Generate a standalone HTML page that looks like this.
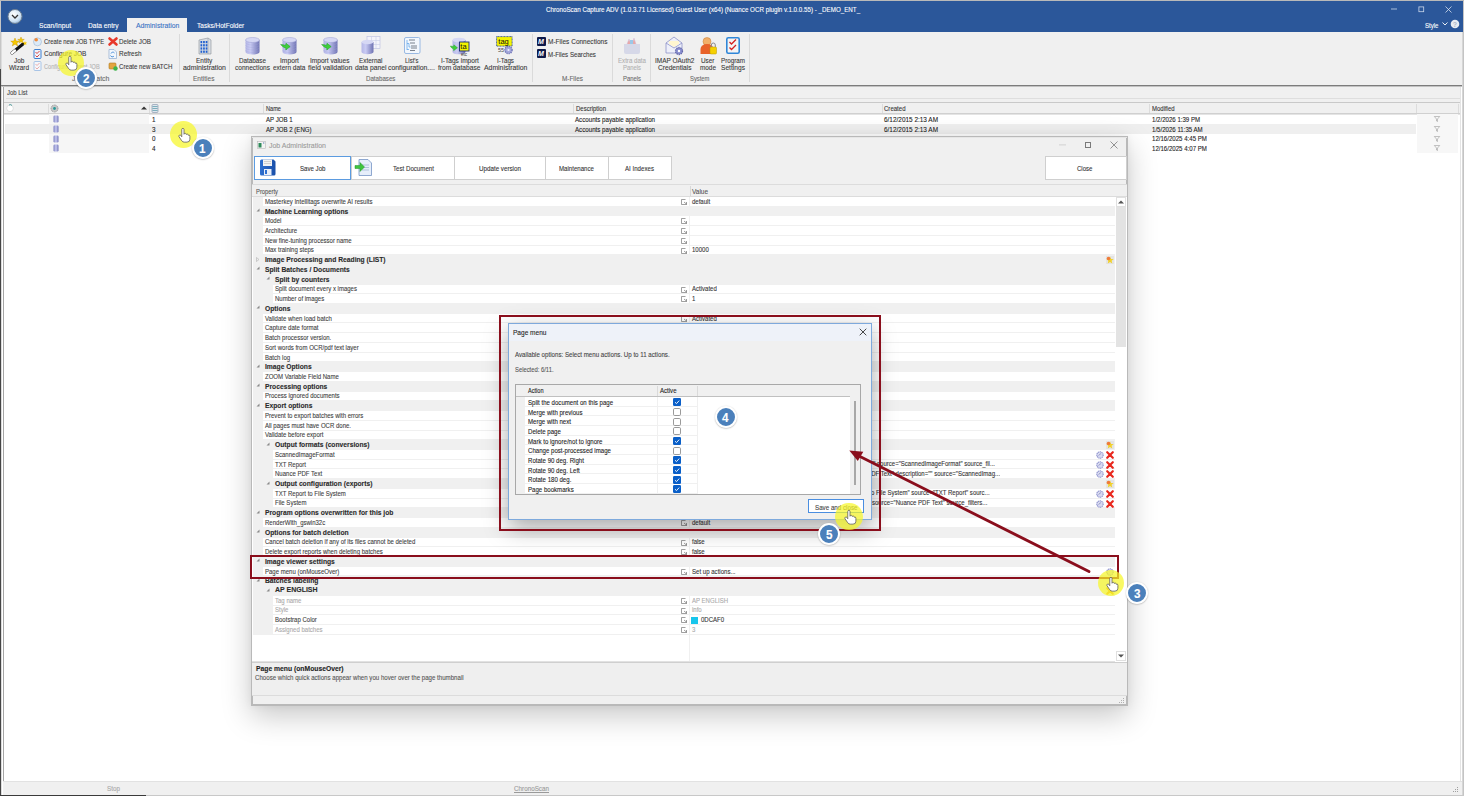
<!DOCTYPE html>
<html><head><meta charset="utf-8"><title>ChronoScan</title>
<style>
html,body{margin:0;padding:0;}
body{width:1464px;height:796px;position:relative;overflow:hidden;background:#fff;font-family:"Liberation Sans",sans-serif;}
.t{position:absolute;white-space:nowrap;line-height:1;transform-origin:0 0;font-family:"Liberation Sans",sans-serif;-webkit-text-stroke:0.1px currentColor;}
.r{position:absolute;box-sizing:border-box;}
svg.r{overflow:visible;}
</style></head><body>
<div class="r" style="left:0px;top:0px;width:1464px;height:796px;background:#ffffff;"></div>
<div class="r" style="left:0px;top:0px;width:1464px;height:1px;background:#b9b9b9;"></div>
<div class="r" style="left:1px;top:1px;width:1462px;height:31px;background:#2b579a;"></div>
<svg class="r" style="left:7px;top:9px;" width="16" height="16" viewBox="0 0 16 16"><defs><radialGradient id="cg" cx="40%" cy="35%" r="70%"><stop offset="0" stop-color="#ffffff"/><stop offset="0.7" stop-color="#cfe3f5"/><stop offset="1" stop-color="#8fb3d6"/></radialGradient></defs><circle cx="8" cy="7.5" r="7" fill="url(#cg)" stroke="#6e7f92" stroke-width="1"/><path d="M5 6 L8 9 L11 6" fill="none" stroke="#333" stroke-width="1.3"/></svg>
<div class="t" style="left:545.60px;top:6.38px;font-size:7px;color:#ffffff;transform:scaleX(0.8905);">ChronoScan Capture ADV (1.0.3.71 Licensed) Guest User  (x64)  (Nuance OCR plugin v.1.0.0.55) - _DEMO_ENT_</div>
<svg class="r" style="left:1391px;top:8px;" width="7" height="2" viewBox="0 0 7 2"><rect x="0" y="0.6" width="6" height="0.8" fill="#c9d6ea"/></svg>
<svg class="r" style="left:1418px;top:6px;" width="7" height="7" viewBox="0 0 7 7"><rect x="0.9" y="0.9" width="4.8" height="4.8" fill="none" stroke="#c9d6ea" stroke-width="0.8"/></svg>
<svg class="r" style="left:1445px;top:6px;" width="7" height="7" viewBox="0 0 7 7"><path d="M0.5 0.5 L6.5 6.5 M6.5 0.5 L0.5 6.5" stroke="#d6e0ef" stroke-width="0.8"/></svg>
<div class="t" style="left:39.00px;top:21.98px;font-size:7px;color:#ffffff;transform:scaleX(0.9561);">Scan/Input</div>
<div class="t" style="left:88.00px;top:21.98px;font-size:7px;color:#ffffff;transform:scaleX(0.9476);">Data entry</div>
<div class="r" style="left:127px;top:18px;width:60px;height:14px;background:#f0f0f0;"></div>
<div class="t" style="left:135.70px;top:21.98px;font-size:7px;color:#3a72c4;transform:scaleX(0.9763);">Administration</div>
<div class="t" style="left:196.50px;top:21.98px;font-size:7px;color:#ffffff;transform:scaleX(0.9333);">Tasks/HotFolder</div>
<div class="t" style="left:1425.00px;top:21.98px;font-size:7px;color:#ffffff;transform:scaleX(0.8675);">Style</div>
<svg class="r" style="left:1442px;top:22px;" width="6" height="4" viewBox="0 0 6 4"><path d="M0.5 0.5 L3 3 L5.5 0.5" fill="none" stroke="#fff" stroke-width="0.9"/></svg>
<svg class="r" style="left:1450px;top:19px;" width="10" height="10" viewBox="0 0 10 10"><circle cx="5" cy="5" r="4.3" fill="#e9edf3"/><text x="5" y="7.6" font-size="7" text-anchor="middle" fill="#aeb8c8" font-family="Liberation Sans" font-weight="bold">?</text></svg>
<div class="r" style="left:1px;top:32px;width:1462px;height:53px;background:#f0f0f0;"></div>
<div class="r" style="left:0px;top:1px;width:1px;height:68px;background:#c6c6c6;"></div>
<div class="r" style="left:0px;top:69px;width:1px;height:727px;background:#454545;"></div>
<div class="r" style="left:1px;top:32px;width:1px;height:764px;background:#dcdcdc;"></div>
<div class="r" style="left:1463px;top:1px;width:1px;height:795px;background:#c4c4c4;"></div>
<div class="r" style="left:1462px;top:32px;width:1px;height:764px;background:#d6d6d6;"></div>
<div class="r" style="left:1px;top:85px;width:1461px;height:1px;background:#7c7c7c;"></div>
<div class="r" style="left:1px;top:86px;width:1461px;height:1px;background:#c2c2c2;"></div>
<div class="r" style="left:179px;top:34px;width:1px;height:48px;background:#dadada;"></div>
<div class="r" style="left:229px;top:34px;width:1px;height:48px;background:#dadada;"></div>
<div class="r" style="left:532px;top:34px;width:1px;height:48px;background:#dadada;"></div>
<div class="r" style="left:612px;top:34px;width:1px;height:48px;background:#dadada;"></div>
<div class="r" style="left:650px;top:34px;width:1px;height:48px;background:#dadada;"></div>
<div class="r" style="left:749px;top:34px;width:1px;height:48px;background:#dadada;"></div>
<svg class="r" style="left:10px;top:37px;" width="18" height="18" viewBox="0 0 18 18"><path d="M2 16 L13 7" stroke="#111" stroke-width="3" stroke-linecap="round"/><path d="M2 16 L5 13.5" stroke="#fff" stroke-width="2.4" stroke-linecap="round"/><polygon points="5,1 6.2,4 9.3,4.1 6.9,6 7.7,9 5,7.3 2.3,9 3.1,6 0.7,4.1 3.8,4" fill="#f6c700" stroke="#c09000" stroke-width="0.4"/><polygon points="11,0 11.9,2.3 14.3,2.4 12.4,3.8 13.1,6.1 11,4.8 8.9,6.1 9.6,3.8 7.7,2.4 10.1,2.3" fill="#f6c700" stroke="#c09000" stroke-width="0.4"/><polygon points="15,4 15.6,5.5 17.2,5.6 16,6.6 16.4,8.1 15,7.2 13.6,8.1 14,6.6 12.8,5.6 14.4,5.5" fill="#f6c700"/></svg>
<div class="t" style="left:13.78px;top:56.88px;font-size:7.2px;color:#3a3a3a;transform:scaleX(0.9000);">Job</div>
<div class="t" style="left:8.92px;top:64.28px;font-size:7.2px;color:#3a3a3a;transform:scaleX(0.9000);">Wizard</div>
<svg class="r" style="left:33px;top:37px;" width="9" height="9" viewBox="0 0 9 9"><circle cx="4.5" cy="4.8" r="4" fill="#dceaf7" stroke="#9bb6d3" stroke-width="0.6"/><circle cx="3.2" cy="2.8" r="1.8" fill="#f08a3a"/></svg>
<div class="t" style="left:43.60px;top:37.98px;font-size:7.2px;color:#3a3a3a;transform:scaleX(0.8191);">Create new JOB TYPE</div>
<svg class="r" style="left:33px;top:49px;" width="9" height="10" viewBox="0 0 9 10"><rect x="1" y="0.5" width="7" height="9" rx="1" fill="#eef4fb" stroke="#3c7fd0" stroke-width="1"/><path d="M2.5 3 L4 4.5 L6.5 2 M2.5 6.5 L4 8 L6.5 5.5" stroke="#d43030" stroke-width="0.9" fill="none"/></svg>
<div class="t" style="left:43.60px;top:50.28px;font-size:7.2px;color:#3a3a3a;transform:scaleX(0.9000);">Configure JOB</div>
<svg class="r" style="left:33px;top:61px;" width="9" height="10" viewBox="0 0 9 10"><rect x="1" y="0.5" width="7" height="9" rx="1" fill="#f4f7fb" stroke="#a8c4e6" stroke-width="1"/><path d="M2.5 3 L4 4.5 L6.5 2 M2.5 6.5 L4 8 L6.5 5.5" stroke="#e8a0a0" stroke-width="0.9" fill="none"/></svg>
<div class="t" style="left:43.60px;top:62.68px;font-size:7.2px;color:#b4b4b4;transform:scaleX(0.7776);">Configure current JOB</div>
<svg class="r" style="left:108px;top:37px;" width="10" height="9" viewBox="0 0 10 9"><path d="M1.5 1.5 L8.5 7.5 M8.5 1.5 L1.5 7.5" stroke="#e8382a" stroke-width="2.6" stroke-linecap="round"/></svg>
<div class="t" style="left:119.00px;top:37.98px;font-size:7.2px;color:#3a3a3a;transform:scaleX(0.8692);">Delete JOB</div>
<svg class="r" style="left:108px;top:49px;" width="9" height="10" viewBox="0 0 9 10"><path d="M1 0.5 H6 L8.5 3 V9.5 H1 Z" fill="#f3f7fc" stroke="#8eabd0" stroke-width="0.7"/><path d="M3 4.5 A2 2 0 0 1 6.5 4 M6 7 A2 2 0 0 1 2.5 6.5" stroke="#3b86d6" stroke-width="0.9" fill="none"/></svg>
<div class="t" style="left:119.00px;top:50.28px;font-size:7.2px;color:#3a3a3a;transform:scaleX(0.8925);">Refresh</div>
<svg class="r" style="left:108px;top:61px;" width="10" height="10" viewBox="0 0 10 10"><rect x="1" y="2" width="7" height="6" rx="1" fill="#e3a540" stroke="#b07820" stroke-width="0.6"/><circle cx="7.5" cy="7.5" r="2.2" fill="#3cb44a"/></svg>
<div class="t" style="left:119.00px;top:62.68px;font-size:7.2px;color:#3a3a3a;transform:scaleX(0.8534);">Create new BATCH</div>
<div class="t" style="left:72.05px;top:74.88px;font-size:7.2px;color:#6a6a6a;transform:scaleX(0.9659);">Job &amp; Batch</div>
<svg class="r" style="left:196px;top:37px;" width="17" height="18" viewBox="0 0 17 18"><path d="M3 3 L12 1 L15 3 V17 L3 17 Z" fill="#d9dde3" stroke="#8a9099" stroke-width="0.6"/><path d="M12 1 V17" stroke="#9aa0a8" stroke-width="0.6"/><rect x="4.5" y="4.0" width="1.7" height="2.2" fill="#1f5fd0"/><rect x="7.1" y="4.0" width="1.7" height="2.2" fill="#1f5fd0"/><rect x="9.7" y="4.0" width="1.7" height="2.2" fill="#1f5fd0"/><rect x="4.5" y="7.2" width="1.7" height="2.2" fill="#1f5fd0"/><rect x="7.1" y="7.2" width="1.7" height="2.2" fill="#1f5fd0"/><rect x="9.7" y="7.2" width="1.7" height="2.2" fill="#1f5fd0"/><rect x="4.5" y="10.4" width="1.7" height="2.2" fill="#1f5fd0"/><rect x="7.1" y="10.4" width="1.7" height="2.2" fill="#1f5fd0"/><rect x="9.7" y="10.4" width="1.7" height="2.2" fill="#1f5fd0"/><rect x="4.5" y="13.600000000000001" width="1.7" height="2.2" fill="#1f5fd0"/><rect x="7.1" y="13.600000000000001" width="1.7" height="2.2" fill="#1f5fd0"/><rect x="9.7" y="13.600000000000001" width="1.7" height="2.2" fill="#1f5fd0"/></svg>
<div class="t" style="left:195.90px;top:56.88px;font-size:7.2px;color:#3a3a3a;transform:scaleX(0.9000);">Entity</div>
<div class="t" style="left:182.50px;top:64.28px;font-size:7.2px;color:#3a3a3a;transform:scaleX(0.9594);">administration</div>
<div class="t" style="left:193.25px;top:74.88px;font-size:7.2px;color:#6a6a6a;transform:scaleX(0.9106);">Entities</div>
<svg class="r" style="left:245px;top:37px;" width="18" height="19" viewBox="0 0 18 19"><defs><linearGradient id="cy245" x1="0" x2="1"><stop offset="0" stop-color="#b4b6e6"/><stop offset="0.35" stop-color="#c9cbf3"/><stop offset="1" stop-color="#6f73b3"/></linearGradient></defs><path d="M0.5 3 V15 A7.0 2.5 0 0 0 14.5 15 V3 Z" fill="url(#cy245)"/><path d="M0.5 5.5 A7.0 2.5 0 0 0 14.5 5.5" fill="none" stroke="#9ea1d6" stroke-width="0.4" opacity="0.7"/><path d="M0.5 8 A7.0 2.5 0 0 0 14.5 8" fill="none" stroke="#9ea1d6" stroke-width="0.4" opacity="0.7"/><path d="M0.5 10.5 A7.0 2.5 0 0 0 14.5 10.5" fill="none" stroke="#9ea1d6" stroke-width="0.4" opacity="0.7"/><path d="M0.5 13 A7.0 2.5 0 0 0 14.5 13" fill="none" stroke="#9ea1d6" stroke-width="0.4" opacity="0.7"/><ellipse cx="7.5" cy="3" rx="7.0" ry="2.5" fill="#d6d8f4" stroke="#9a9dd0" stroke-width="0.5"/></svg>
<div class="t" style="left:238.50px;top:56.88px;font-size:7.2px;color:#3a3a3a;transform:scaleX(0.8760);">Database</div>
<div class="t" style="left:234.50px;top:64.28px;font-size:7.2px;color:#3a3a3a;transform:scaleX(0.9108);">connections</div>
<svg class="r" style="left:282px;top:37px;" width="18" height="19" viewBox="0 0 18 19"><defs><linearGradient id="cy282" x1="0" x2="1"><stop offset="0" stop-color="#b4b6e6"/><stop offset="0.35" stop-color="#c9cbf3"/><stop offset="1" stop-color="#6f73b3"/></linearGradient></defs><path d="M0.5 3 V15 A7.0 2.5 0 0 0 14.5 15 V3 Z" fill="url(#cy282)"/><path d="M0.5 5.5 A7.0 2.5 0 0 0 14.5 5.5" fill="none" stroke="#9ea1d6" stroke-width="0.4" opacity="0.7"/><path d="M0.5 8 A7.0 2.5 0 0 0 14.5 8" fill="none" stroke="#9ea1d6" stroke-width="0.4" opacity="0.7"/><path d="M0.5 10.5 A7.0 2.5 0 0 0 14.5 10.5" fill="none" stroke="#9ea1d6" stroke-width="0.4" opacity="0.7"/><path d="M0.5 13 A7.0 2.5 0 0 0 14.5 13" fill="none" stroke="#9ea1d6" stroke-width="0.4" opacity="0.7"/><ellipse cx="7.5" cy="3" rx="7.0" ry="2.5" fill="#d6d8f4" stroke="#9a9dd0" stroke-width="0.5"/><path d="M-1.4 7.5 Q1.5 7.5 3.5 8.5 L4 6.2 L8.2 9.6 L3.8 13 L3.9 11.2 Q1 10.5 -1.4 7.5 Z" fill="#3fcf3a" stroke="#1c9a22" stroke-width="0.5"/></svg>
<div class="t" style="left:279.50px;top:56.88px;font-size:7.2px;color:#3a3a3a;transform:scaleX(0.9312);">Import</div>
<div class="t" style="left:272.75px;top:64.28px;font-size:7.2px;color:#3a3a3a;transform:scaleX(0.9022);">extern data</div>
<svg class="r" style="left:323px;top:37px;" width="18" height="19" viewBox="0 0 18 19"><defs><linearGradient id="cy323" x1="0" x2="1"><stop offset="0" stop-color="#b4b6e6"/><stop offset="0.35" stop-color="#c9cbf3"/><stop offset="1" stop-color="#6f73b3"/></linearGradient></defs><path d="M0.5 3 V15 A7.0 2.5 0 0 0 14.5 15 V3 Z" fill="url(#cy323)"/><path d="M0.5 5.5 A7.0 2.5 0 0 0 14.5 5.5" fill="none" stroke="#9ea1d6" stroke-width="0.4" opacity="0.7"/><path d="M0.5 8 A7.0 2.5 0 0 0 14.5 8" fill="none" stroke="#9ea1d6" stroke-width="0.4" opacity="0.7"/><path d="M0.5 10.5 A7.0 2.5 0 0 0 14.5 10.5" fill="none" stroke="#9ea1d6" stroke-width="0.4" opacity="0.7"/><path d="M0.5 13 A7.0 2.5 0 0 0 14.5 13" fill="none" stroke="#9ea1d6" stroke-width="0.4" opacity="0.7"/><ellipse cx="7.5" cy="3" rx="7.0" ry="2.5" fill="#d6d8f4" stroke="#9a9dd0" stroke-width="0.5"/><path d="M-1.4 7.5 Q1.5 7.5 3.5 8.5 L4 6.2 L8.2 9.6 L3.8 13 L3.9 11.2 Q1 10.5 -1.4 7.5 Z" fill="#3fcf3a" stroke="#1c9a22" stroke-width="0.5"/></svg>
<div class="t" style="left:310.25px;top:56.88px;font-size:7.2px;color:#3a3a3a;transform:scaleX(0.9140);">Import values</div>
<div class="t" style="left:307.75px;top:64.28px;font-size:7.2px;color:#3a3a3a;transform:scaleX(0.9752);">field validation</div>
<svg class="r" style="left:361px;top:36px;" width="20" height="19" viewBox="0 0 20 19"><rect x="6" y="0.5" width="13" height="12" fill="#f4f4fb" stroke="#b8bde0" stroke-width="0.6"/><path d="M6 4.5 H19 M6 8.5 H19 M10.5 0.5 V12.5 M15 0.5 V12.5" stroke="#c8cce8" stroke-width="0.6"/><defs><linearGradient id="cyx" x1="0" x2="1"><stop offset="0" stop-color="#b4b6e6"/><stop offset="0.35" stop-color="#c9cbf3"/><stop offset="1" stop-color="#6f73b3"/></linearGradient></defs><path d="M0.5 6 V16 A6 2.2 0 0 0 12.5 16 V6 Z" fill="url(#cyx)"/><ellipse cx="6.5" cy="6" rx="6" ry="2.2" fill="#d6d8f4"/></svg>
<div class="t" style="left:359.25px;top:56.88px;font-size:7.2px;color:#3a3a3a;transform:scaleX(0.8897);">External</div>
<div class="t" style="left:355.25px;top:64.28px;font-size:7.2px;color:#3a3a3a;transform:scaleX(0.9366);">data panel</div>
<svg class="r" style="left:404px;top:37px;" width="17" height="17" viewBox="0 0 17 17"><rect x="0.5" y="0.5" width="15.5" height="16" rx="1.5" fill="#f2f7fd" stroke="#8fb2e0" stroke-width="0.9"/><path d="M3 3 V13 M3 6.5 H5 M5 6.5 V10 H6.5 M3 12.5 H5" fill="none" stroke="#5aa0e8" stroke-width="0.7"/><path d="M5 3 H11 M6 6 H11 M7 9 H13 M7 11 H13 M6 13.5 H11" stroke="#6a7280" stroke-width="0.9"/></svg>
<div class="t" style="left:404.75px;top:56.88px;font-size:7.2px;color:#3a3a3a;transform:scaleX(0.8344);">List&#x27;s</div>
<div class="t" style="left:388.00px;top:64.28px;font-size:7.2px;color:#3a3a3a;transform:scaleX(0.9547);">configuration....</div>
<svg class="r" style="left:450px;top:37px;" width="20" height="19" viewBox="0 0 20 19"><defs><linearGradient id="cyi" x1="0" x2="1"><stop offset="0" stop-color="#b4b6e6"/><stop offset="0.35" stop-color="#c9cbf3"/><stop offset="1" stop-color="#6f73b3"/></linearGradient></defs><path d="M2.5 3 V15 A6.5 2.3 0 0 0 15.5 15 V3 Z" fill="url(#cyi)"/><ellipse cx="9" cy="3" rx="6.5" ry="2.3" fill="#d6d8f4"/><rect x="9.5" y="5" width="9.5" height="9" fill="#f4f400" stroke="#1a2a7a" stroke-width="0.9"/><text x="10.3" y="12.3" font-size="7.5" font-family="Liberation Sans" fill="#111">ta</text><path d="M0.3 9 Q2 9 3.5 9.8 L3.8 7.8 L7.5 10.8 L3.6 13.8 L3.7 12 Q1.5 11.5 0.3 9 Z" fill="#3fcf3a" stroke="#1c9a22" stroke-width="0.4"/><text x="11" y="18.5" font-size="4.5" fill="#333" font-family="Liberation Sans">etc</text></svg>
<div class="t" style="left:440.50px;top:56.88px;font-size:7.2px;color:#3a3a3a;transform:scaleX(0.9132);">I-Tags import</div>
<div class="t" style="left:438.25px;top:64.28px;font-size:7.2px;color:#3a3a3a;transform:scaleX(0.9234);">from database</div>
<svg class="r" style="left:496px;top:36px;" width="18" height="19" viewBox="0 0 18 19"><rect x="0.6" y="0.6" width="15.5" height="9.5" fill="#f4f400" stroke="#2a4aa8" stroke-width="0.9" stroke-dasharray="1 0.5"/><text x="2.3" y="8" font-size="7.5" font-family="Liberation Sans" fill="#111">tag</text><text x="2" y="15.5" font-size="5.5" font-family="Liberation Sans" fill="#444">55</text><circle cx="12.5" cy="14" r="3.6" fill="#a4a8dc" stroke="#7478b8" stroke-width="1.4" stroke-dasharray="1.3 0.8"/><circle cx="12.5" cy="14" r="1.1" fill="#eef"/></svg>
<div class="t" style="left:497.00px;top:56.88px;font-size:7.2px;color:#3a3a3a;transform:scaleX(0.8670);">I-Tags</div>
<div class="t" style="left:483.75px;top:64.28px;font-size:7.2px;color:#3a3a3a;transform:scaleX(0.9535);">Administration</div>
<div class="t" style="left:365.95px;top:74.88px;font-size:7.2px;color:#6a6a6a;transform:scaleX(0.8570);">Databases</div>
<svg class="r" style="left:537px;top:37px;" width="9" height="9" viewBox="0 0 9 9"><rect x="0" y="0" width="9" height="9" rx="1" fill="#0e1a4a"/><text x="1" y="7" font-size="7" font-style="italic" font-weight="bold" font-family="Liberation Sans" fill="#fff">M</text></svg>
<div class="t" style="left:547.50px;top:38.38px;font-size:7.2px;color:#3a3a3a;transform:scaleX(0.9067);">M-Files Connections</div>
<svg class="r" style="left:537px;top:49px;" width="9" height="9" viewBox="0 0 9 9"><rect x="0" y="0" width="9" height="9" rx="1" fill="#0e1a4a"/><text x="1" y="7" font-size="7" font-style="italic" font-weight="bold" font-family="Liberation Sans" fill="#fff">M</text></svg>
<div class="t" style="left:547.50px;top:50.68px;font-size:7.2px;color:#3a3a3a;transform:scaleX(0.8569);">M-Files Searches</div>
<div class="t" style="left:561.50px;top:74.88px;font-size:7.2px;color:#6a6a6a;transform:scaleX(0.8899);">M-Files</div>
<svg class="r" style="left:623px;top:37px;" width="18" height="17" viewBox="0 0 18 17"><path d="M1 7 H17 V15 A2 2 0 0 1 15 17 H3 A2 2 0 0 1 1 15 Z" fill="#d6d8e8"/><path d="M4 7 L6 2 L8 7 M9 7 L11 1 L13 7" fill="#e8a8a8" stroke="#d0c0e0" stroke-width="0.5"/><rect x="7" y="3" width="3" height="4" fill="#9cc8e8"/></svg>
<div class="t" style="left:618.00px;top:56.88px;font-size:7.2px;color:#b0b0b0;transform:scaleX(0.8532);">Extra data</div>
<div class="t" style="left:623.00px;top:64.28px;font-size:7.2px;color:#b0b0b0;transform:scaleX(0.8176);">Panels</div>
<div class="t" style="left:623.00px;top:74.88px;font-size:7.2px;color:#6a6a6a;transform:scaleX(0.8176);">Panels</div>
<svg class="r" style="left:665px;top:36px;" width="19" height="19" viewBox="0 0 19 19"><path d="M1 7 L9 1 L17 7 V17 H1 Z" fill="#eef0fa" stroke="#8e93c8" stroke-width="0.8"/><path d="M1 7 L9 12 L17 7" fill="none" stroke="#8e93c8" stroke-width="0.8"/><path d="M4 5 H14 V8 L9 11 L4 8 Z" fill="#fff6d0"/><circle cx="14" cy="15" r="3.5" fill="#8a8fd0" stroke="#666aa8" stroke-width="1.3" stroke-dasharray="1.3 0.9"/><circle cx="14" cy="15" r="1.2" fill="#fff"/></svg>
<div class="t" style="left:655.25px;top:56.88px;font-size:7.2px;color:#3a3a3a;transform:scaleX(0.9000);">IMAP OAuth2</div>
<div class="t" style="left:658.25px;top:64.28px;font-size:7.2px;color:#3a3a3a;transform:scaleX(0.9199);">Credentials</div>
<svg class="r" style="left:700px;top:37px;" width="17" height="18" viewBox="0 0 17 18"><circle cx="7" cy="4.5" r="4" fill="#f2b06a" stroke="#c77b30" stroke-width="0.5"/><path d="M0.5 17 V12 A6.5 5 0 0 1 13.5 12 V17 Z" fill="#e8622a"/><rect x="10" y="10" width="6.5" height="7" rx="1" fill="#f5d000" stroke="#b89800" stroke-width="0.5"/><path d="M11.3 10 V8 A2 2 0 0 1 15.3 8 V10" fill="none" stroke="#888" stroke-width="1"/></svg>
<div class="t" style="left:701.25px;top:56.88px;font-size:7.2px;color:#3a3a3a;transform:scaleX(0.8881);">User</div>
<div class="t" style="left:700.00px;top:64.28px;font-size:7.2px;color:#3a3a3a;transform:scaleX(0.8884);">mode</div>
<svg class="r" style="left:726px;top:37px;" width="14" height="17" viewBox="0 0 14 17"><rect x="0.8" y="0.8" width="12.4" height="15.4" rx="1.5" fill="#f4f4f4" stroke="#2f86d8" stroke-width="1.6"/><path d="M3.5 5 L5.5 7 L10 2.5 M3.5 10.5 L5.5 12.5 L10 8" stroke="#d42020" stroke-width="1.3" fill="none"/></svg>
<div class="t" style="left:721.00px;top:56.88px;font-size:7.2px;color:#3a3a3a;transform:scaleX(0.8693);">Program</div>
<div class="t" style="left:721.00px;top:64.28px;font-size:7.2px;color:#3a3a3a;transform:scaleX(0.9225);">Settings</div>
<div class="t" style="left:690.25px;top:74.88px;font-size:7.2px;color:#6a6a6a;transform:scaleX(0.8123);">System</div>
<div class="r" style="left:3px;top:87px;width:1459px;height:694px;background:#ffffff;"></div>
<div class="r" style="left:3px;top:87px;width:1457px;height:12px;background:#f0f0f0;"></div>
<div class="t" style="left:6.80px;top:89.28px;font-size:7px;color:#444;transform:scaleX(0.8498);">Job List</div>
<div class="r" style="left:6px;top:98px;width:1454px;height:1px;background:#dedede;"></div>
<div class="r" style="left:3px;top:99px;width:1457px;height:3px;background:#f0f0f0;"></div>
<div class="r" style="left:3px;top:102px;width:1457px;height:1px;background:#c9c9c9;"></div>
<div class="r" style="left:3px;top:103px;width:1457px;height:10px;background:#f0f0f0;"></div>
<div class="r" style="left:3px;top:113px;width:1457px;height:1px;background:#d0d0d0;"></div>
<div class="r" style="left:3px;top:114px;width:1457px;height:1px;background:#e4e4e4;"></div>
<div class="r" style="left:3px;top:87px;width:1px;height:694px;background:#a6a6a6;"></div>
<div class="r" style="left:1460px;top:87px;width:1px;height:694px;background:#e4e4e4;"></div>
<div class="r" style="left:48px;top:104px;width:1px;height:9px;background:#dcdcdc;"></div>
<div class="r" style="left:149px;top:104px;width:1px;height:9px;background:#dcdcdc;"></div>
<div class="r" style="left:263px;top:104px;width:1px;height:9px;background:#dcdcdc;"></div>
<div class="r" style="left:573px;top:104px;width:1px;height:9px;background:#dcdcdc;"></div>
<div class="r" style="left:882px;top:104px;width:1px;height:9px;background:#dcdcdc;"></div>
<div class="r" style="left:1149px;top:104px;width:1px;height:9px;background:#dcdcdc;"></div>
<div class="r" style="left:1416px;top:104px;width:1px;height:9px;background:#dcdcdc;"></div>
<div class="r" style="left:1458px;top:104px;width:1px;height:9px;background:#dcdcdc;"></div>
<svg class="r" style="left:6px;top:104px;" width="8" height="8" viewBox="0 0 8 8"><circle cx="4" cy="4.3" r="3.3" fill="#fff" stroke="#ccc" stroke-width="0.6"/><path d="M3 1 A2 1.5 0 0 1 6 1.5" stroke="#2a8a8a" stroke-width="0.8" fill="none"/></svg>
<svg class="r" style="left:50px;top:104px;" width="9" height="9" viewBox="0 0 9 9"><circle cx="4.5" cy="4.5" r="3.5" fill="#c8c8c8" stroke="#999" stroke-width="1" stroke-dasharray="1 0.7"/><circle cx="4.5" cy="4.5" r="1.4" fill="#2a9a9a"/></svg>
<svg class="r" style="left:141px;top:106px;" width="6" height="4" viewBox="0 0 6 4"><path d="M0 3.5 L3 0.5 L6 3.5 Z" fill="#333"/></svg>
<svg class="r" style="left:151px;top:104px;" width="8" height="9" viewBox="0 0 8 9"><rect x="1" y="0.5" width="6" height="8" rx="1" fill="#dfe6ee" stroke="#7d8ea4" stroke-width="0.6"/><path d="M1.5 2.5 H6.5 M1.5 4.5 H6.5 M1.5 6.5 H6.5" stroke="#3a8a9a" stroke-width="0.6"/></svg>
<div class="t" style="left:265.70px;top:105.38px;font-size:7px;color:#333;transform:scaleX(0.8033);">Name</div>
<div class="t" style="left:575.80px;top:105.38px;font-size:7px;color:#333;transform:scaleX(0.8568);">Description</div>
<div class="t" style="left:884.00px;top:105.38px;font-size:7px;color:#333;transform:scaleX(0.8633);">Created</div>
<div class="t" style="left:1151.50px;top:105.38px;font-size:7px;color:#333;transform:scaleX(0.8542);">Modified</div>
<div class="r" style="left:49px;top:114px;width:100px;height:10px;background:#f6f6f6;"></div>
<div class="r" style="left:1417px;top:114px;width:41px;height:10px;background:#f7f7f7;"></div>
<svg class="r" style="left:53px;top:115px;" width="6" height="8" viewBox="0 0 6 8"><defs><linearGradient id="lc" x1="0" x2="1"><stop offset="0" stop-color="#7c80c0"/><stop offset="0.5" stop-color="#c8caf0"/><stop offset="1" stop-color="#7074b8"/></linearGradient></defs><rect x="0.5" y="0.5" width="5" height="7" rx="1.2" fill="url(#lc)"/></svg>
<div class="t" style="left:152.00px;top:116.08px;font-size:7px;color:#222;transform:scaleX(0.9000);">1</div>
<div class="t" style="left:265.50px;top:116.08px;font-size:7px;color:#222;transform:scaleX(0.8700);">AP JOB 1</div>
<div class="t" style="left:575.30px;top:116.08px;font-size:7px;color:#222;transform:scaleX(0.8823);">Accounts payable application</div>
<div class="t" style="left:884.00px;top:116.08px;font-size:7px;color:#222;transform:scaleX(0.9189);">6/12/2015 2:13 AM</div>
<div class="t" style="left:1151.50px;top:116.08px;font-size:7px;color:#222;transform:scaleX(0.8700);">1/2/2026 1:39 PM</div>
<svg class="r" style="left:1434px;top:116px;" width="6" height="6" viewBox="0 0 6 6"><path d="M0.3 0.5 H5.7 L3.5 3 V5.5 L2.5 5 V3 Z" fill="none" stroke="#8a8a8a" stroke-width="0.5"/></svg>
<div class="r" style="left:5px;top:124px;width:1411px;height:10px;background:#efefef;"></div>
<div class="r" style="left:49px;top:124px;width:100px;height:10px;background:#efefef;"></div>
<div class="r" style="left:1417px;top:124px;width:41px;height:10px;background:#f7f7f7;"></div>
<svg class="r" style="left:53px;top:125px;" width="6" height="8" viewBox="0 0 6 8"><defs><linearGradient id="lc" x1="0" x2="1"><stop offset="0" stop-color="#7c80c0"/><stop offset="0.5" stop-color="#c8caf0"/><stop offset="1" stop-color="#7074b8"/></linearGradient></defs><rect x="0.5" y="0.5" width="5" height="7" rx="1.2" fill="url(#lc)"/></svg>
<div class="t" style="left:152.00px;top:125.78px;font-size:7px;color:#222;transform:scaleX(0.9000);">3</div>
<div class="t" style="left:265.50px;top:125.78px;font-size:7px;color:#222;transform:scaleX(0.8700);">AP JOB 2 (ENG)</div>
<div class="t" style="left:575.30px;top:125.78px;font-size:7px;color:#222;transform:scaleX(0.8823);">Accounts payable application</div>
<div class="t" style="left:884.00px;top:125.78px;font-size:7px;color:#222;transform:scaleX(0.9189);">6/12/2015 2:13 AM</div>
<div class="t" style="left:1151.50px;top:125.78px;font-size:7px;color:#222;transform:scaleX(0.8700);">1/5/2026 11:35 AM</div>
<svg class="r" style="left:1434px;top:126px;" width="6" height="6" viewBox="0 0 6 6"><path d="M0.3 0.5 H5.7 L3.5 3 V5.5 L2.5 5 V3 Z" fill="none" stroke="#8a8a8a" stroke-width="0.5"/></svg>
<div class="r" style="left:49px;top:134px;width:100px;height:10px;background:#f6f6f6;"></div>
<div class="r" style="left:1417px;top:134px;width:41px;height:10px;background:#f7f7f7;"></div>
<svg class="r" style="left:53px;top:135px;" width="6" height="8" viewBox="0 0 6 8"><defs><linearGradient id="lc" x1="0" x2="1"><stop offset="0" stop-color="#7c80c0"/><stop offset="0.5" stop-color="#c8caf0"/><stop offset="1" stop-color="#7074b8"/></linearGradient></defs><rect x="0.5" y="0.5" width="5" height="7" rx="1.2" fill="url(#lc)"/></svg>
<div class="t" style="left:152.00px;top:135.48px;font-size:7px;color:#222;transform:scaleX(0.9000);">0</div>
<div class="t" style="left:265.50px;top:135.48px;font-size:7px;color:#222;transform:scaleX(0.8700);">Invoice Japanese</div>
<div class="t" style="left:575.30px;top:135.48px;font-size:7px;color:#222;transform:scaleX(0.8700);">Invoices Japanese</div>
<div class="t" style="left:884.00px;top:135.48px;font-size:7px;color:#222;transform:scaleX(0.8700);">6/2/2025 10:14 AM</div>
<div class="t" style="left:1151.50px;top:135.48px;font-size:7px;color:#222;transform:scaleX(0.8700);">12/16/2025 4:45 PM</div>
<svg class="r" style="left:1434px;top:136px;" width="6" height="6" viewBox="0 0 6 6"><path d="M0.3 0.5 H5.7 L3.5 3 V5.5 L2.5 5 V3 Z" fill="none" stroke="#8a8a8a" stroke-width="0.5"/></svg>
<div class="r" style="left:49px;top:143px;width:100px;height:10px;background:#f6f6f6;"></div>
<div class="r" style="left:1417px;top:143px;width:41px;height:10px;background:#f7f7f7;"></div>
<svg class="r" style="left:53px;top:144px;" width="6" height="8" viewBox="0 0 6 8"><defs><linearGradient id="lc" x1="0" x2="1"><stop offset="0" stop-color="#7c80c0"/><stop offset="0.5" stop-color="#c8caf0"/><stop offset="1" stop-color="#7074b8"/></linearGradient></defs><rect x="0.5" y="0.5" width="5" height="7" rx="1.2" fill="url(#lc)"/></svg>
<div class="t" style="left:152.00px;top:145.18px;font-size:7px;color:#222;transform:scaleX(0.9000);">4</div>
<div class="t" style="left:265.50px;top:145.18px;font-size:7px;color:#222;transform:scaleX(0.8700);">Invoice Arabic</div>
<div class="t" style="left:575.30px;top:145.18px;font-size:7px;color:#222;transform:scaleX(0.8700);">Invoice arabic</div>
<div class="t" style="left:884.00px;top:145.18px;font-size:7px;color:#222;transform:scaleX(0.8700);">6/2/2025 10:14 AM</div>
<div class="t" style="left:1151.50px;top:145.18px;font-size:7px;color:#222;transform:scaleX(0.8700);">12/16/2025 4:07 PM</div>
<svg class="r" style="left:1434px;top:145px;" width="6" height="6" viewBox="0 0 6 6"><path d="M0.3 0.5 H5.7 L3.5 3 V5.5 L2.5 5 V3 Z" fill="none" stroke="#8a8a8a" stroke-width="0.5"/></svg>
<div class="r" style="left:3px;top:781px;width:1459px;height:1px;background:#e2e2e2;"></div>
<div class="r" style="left:3px;top:782px;width:1459px;height:13px;background:#f0f0f0;"></div>
<div class="t" style="left:106.52px;top:785.48px;font-size:7px;color:#a8a8a8;transform:scaleX(0.9000);">Stop</div>
<div class="t" style="left:513.50px;top:785.48px;font-size:7px;color:#9a9a9a;transform:scaleX(0.8994);text-decoration:underline;">ChronoScan</div>
<div class="r" style="left:0px;top:795px;width:146px;height:1px;background:#3a3a3a;"></div>
<div class="r" style="left:146px;top:795px;width:1318px;height:1px;background:#c8c8c8;"></div>
<svg class="r" style="left:1453px;top:787px;" width="6" height="6" viewBox="0 0 6 6"><g fill="#a0a0a0"><rect x="4" y="0" width="1" height="1"/><rect x="2" y="2" width="1" height="1"/><rect x="4" y="2" width="1" height="1"/><rect x="0" y="4" width="1" height="1"/><rect x="2" y="4" width="1" height="1"/><rect x="4" y="4" width="1" height="1"/></g></svg>
<div class="r" style="left:251px;top:136px;width:877px;height:570px;background:#f0f0f0;border:2px solid #b9b9b9;box-shadow:0 10px 28px rgba(0,0,0,0.22), 0 0 8px rgba(0,0,0,0.05);"></div>
<div class="r" style="left:252px;top:137px;width:875px;height:1px;background:#e6e6e6;"></div>
<svg class="r" style="left:257px;top:141px;" width="9" height="8" viewBox="0 0 9 8"><rect x="0.5" y="0.5" width="8" height="7" fill="#f3f3f3" stroke="#b8b8b8" stroke-width="0.6"/><rect x="1.5" y="2" width="3" height="4.5" fill="#2e8a5a"/><rect x="6" y="1.5" width="1.3" height="1" fill="#5a7ab0"/></svg>
<div class="t" style="left:269.00px;top:142.29px;font-size:7.6px;color:#9a9a9a;transform:scaleX(0.9179);">Job Administration</div>
<svg class="r" style="left:1059px;top:144px;" width="7" height="2" viewBox="0 0 7 2"><rect x="0" y="0.5" width="7" height="0.8" fill="#c9c9c9"/></svg>
<div class="r" style="left:1085px;top:142px;width:6px;height:6px;border:1px solid #7a7a7a;"></div>
<svg class="r" style="left:1110px;top:141px;" width="8" height="8" viewBox="0 0 8 8"><path d="M0.5 0.5 L7.5 7.5 M7.5 0.5 L0.5 7.5" stroke="#7a7a7a" stroke-width="0.8"/></svg>
<div class="r" style="left:254px;top:156px;width:97px;height:24px;background:#ffffff;border:1px solid #5b9be0;"></div>
<svg class="r" style="left:259px;top:159px;" width="17" height="17" viewBox="0 0 17 17"><defs><linearGradient id="fl" x1="0" x2="1"><stop offset="0" stop-color="#2d6fd0"/><stop offset="1" stop-color="#1a4fa8"/></linearGradient></defs><path d="M1 2 A1.5 1.5 0 0 1 2.5 0.5 H14.5 L16.5 2.5 V15 A1.5 1.5 0 0 1 15 16.5 H2.5 A1.5 1.5 0 0 1 1 15 Z" fill="url(#fl)"/><rect x="4" y="0.5" width="9" height="6.5" fill="#f2f2f2"/><path d="M5 2.5 H12 M5 4.5 H12" stroke="#bbb" stroke-width="0.6"/><rect x="5" y="10" width="7.5" height="6" fill="#e8eef8"/><rect x="6" y="11" width="2" height="4" fill="#2d6fd0"/></svg>
<div class="t" style="left:300.05px;top:164.88px;font-size:7.2px;color:#333;transform:scaleX(0.8494);">Save Job</div>
<div class="r" style="left:351px;top:156px;width:104px;height:24px;background:#ffffff;border:1px solid #cfcfcf;"></div>
<div class="t" style="left:393.20px;top:164.88px;font-size:7.2px;color:#333;transform:scaleX(0.8538);">Test Document</div>
<div class="r" style="left:454px;top:156px;width:92px;height:24px;background:#ffffff;border:1px solid #cfcfcf;"></div>
<div class="t" style="left:478.70px;top:164.88px;font-size:7.2px;color:#333;transform:scaleX(0.8673);">Update version</div>
<div class="r" style="left:545px;top:156px;width:64px;height:24px;background:#ffffff;border:1px solid #cfcfcf;"></div>
<div class="t" style="left:559.00px;top:164.88px;font-size:7.2px;color:#333;transform:scaleX(0.8489);">Maintenance</div>
<div class="r" style="left:608px;top:156px;width:64px;height:24px;background:#ffffff;border:1px solid #cfcfcf;"></div>
<div class="t" style="left:625.40px;top:164.88px;font-size:7.2px;color:#333;transform:scaleX(0.8524);">AI Indexes</div>
<div class="r" style="left:1045px;top:156px;width:82px;height:24px;background:#ffffff;border:1px solid #cfcfcf;"></div>
<div class="t" style="left:1077.25px;top:164.88px;font-size:7.2px;color:#333;transform:scaleX(0.8420);">Close</div>
<svg class="r" style="left:355px;top:159px;" width="17" height="17" viewBox="0 0 17 17"><path d="M4 0.5 H13 L16.5 4 V16.5 H4 Z" fill="#e6eefa" stroke="#7594c4" stroke-width="0.8"/><path d="M7 6 H14 M7 8.5 H14 M7 11 H14" stroke="#9ab0d0" stroke-width="0.7"/><path d="M0 6.5 H5 V3.5 L9.5 8 L5 12.5 V9.5 H0 Z" fill="#3ec43e" stroke="#24922a" stroke-width="0.5"/></svg>
<div class="r" style="left:252px;top:184px;width:875px;height:1px;background:#dcdcdc;"></div>
<div class="r" style="left:252px;top:185px;width:875px;height:12px;background:#f0f0f0;"></div>
<div class="t" style="left:255.50px;top:188.18px;font-size:7px;color:#555;transform:scaleX(0.8316);">Property</div>
<div class="r" style="left:690px;top:186px;width:1px;height:10px;background:#d8d8d8;"></div>
<div class="t" style="left:692.00px;top:188.18px;font-size:7px;color:#555;transform:scaleX(0.9204);">Value</div>
<div class="r" style="left:252px;top:196px;width:875px;height:1px;background:#dcdcdc;"></div>
<div class="r" style="left:252px;top:197px;width:863px;height:465px;background:#ffffff;"></div>
<div class="r" style="left:253px;top:197px;width:10px;height:437px;background:#f0f0f0;"></div>
<div class="r" style="left:263px;top:197px;width:852px;height:10px;background:#ffffff;border-bottom:1px solid #f0f0f0;"></div>
<div class="t" style="left:265.00px;top:197.83px;font-size:7px;color:#404040;transform:scaleX(0.8600);">Masterkey Intellitags overwrite AI results</div>
<svg class="r" style="left:681px;top:199px;" width="7" height="6" viewBox="0 0 7 6"><path d="M4.5 0.5 H0.5 V5.5 H5.5 V3" fill="none" stroke="#777" stroke-width="0.7"/><path d="M3 3 L6 5.5" stroke="#777" stroke-width="0.7"/></svg>
<div class="r" style="left:689px;top:197px;width:1px;height:10px;background:#f0f0f0;"></div>
<div class="t" style="left:692.00px;top:197.83px;font-size:7px;color:#333333;transform:scaleX(0.8600);">default</div>
<div class="r" style="left:253px;top:207px;width:862px;height:9px;background:#f0f0f0;"></div>
<svg class="r" style="left:256px;top:208px;" width="4" height="4" viewBox="0 0 4 4"><path d="M3.5 0.5 V3.5 H0.5 Z" fill="#8a8a8a"/></svg>
<div class="t" style="left:264.80px;top:207.56px;font-size:7px;color:#2a2a2a;font-weight:bold;transform:scaleX(0.9600);">Machine Learning options</div>
<div class="r" style="left:263px;top:216px;width:852px;height:10px;background:#ffffff;border-bottom:1px solid #f0f0f0;"></div>
<div class="t" style="left:265.00px;top:217.29px;font-size:7px;color:#404040;transform:scaleX(0.8600);">Model</div>
<svg class="r" style="left:681px;top:218px;" width="7" height="6" viewBox="0 0 7 6"><path d="M4.5 0.5 H0.5 V5.5 H5.5 V3" fill="none" stroke="#777" stroke-width="0.7"/><path d="M3 3 L6 5.5" stroke="#777" stroke-width="0.7"/></svg>
<div class="r" style="left:689px;top:216px;width:1px;height:10px;background:#f0f0f0;"></div>
<div class="r" style="left:263px;top:226px;width:852px;height:10px;background:#ffffff;border-bottom:1px solid #f0f0f0;"></div>
<div class="t" style="left:265.00px;top:227.02px;font-size:7px;color:#404040;transform:scaleX(0.8600);">Architecture</div>
<svg class="r" style="left:681px;top:228px;" width="7" height="6" viewBox="0 0 7 6"><path d="M4.5 0.5 H0.5 V5.5 H5.5 V3" fill="none" stroke="#777" stroke-width="0.7"/><path d="M3 3 L6 5.5" stroke="#777" stroke-width="0.7"/></svg>
<div class="r" style="left:689px;top:226px;width:1px;height:10px;background:#f0f0f0;"></div>
<div class="r" style="left:263px;top:236px;width:852px;height:10px;background:#ffffff;border-bottom:1px solid #f0f0f0;"></div>
<div class="t" style="left:265.00px;top:236.75px;font-size:7px;color:#404040;transform:scaleX(0.8600);">New fine-tuning processor name</div>
<svg class="r" style="left:681px;top:238px;" width="7" height="6" viewBox="0 0 7 6"><path d="M4.5 0.5 H0.5 V5.5 H5.5 V3" fill="none" stroke="#777" stroke-width="0.7"/><path d="M3 3 L6 5.5" stroke="#777" stroke-width="0.7"/></svg>
<div class="r" style="left:689px;top:236px;width:1px;height:10px;background:#f0f0f0;"></div>
<div class="r" style="left:263px;top:246px;width:852px;height:9px;background:#ffffff;border-bottom:1px solid #f0f0f0;"></div>
<div class="t" style="left:265.00px;top:246.48px;font-size:7px;color:#404040;transform:scaleX(0.8600);">Max training steps</div>
<svg class="r" style="left:681px;top:248px;" width="7" height="6" viewBox="0 0 7 6"><path d="M4.5 0.5 H0.5 V5.5 H5.5 V3" fill="none" stroke="#777" stroke-width="0.7"/><path d="M3 3 L6 5.5" stroke="#777" stroke-width="0.7"/></svg>
<div class="r" style="left:689px;top:246px;width:1px;height:9px;background:#f0f0f0;"></div>
<div class="t" style="left:692.00px;top:246.48px;font-size:7px;color:#333333;transform:scaleX(0.8600);">10000</div>
<div class="r" style="left:253px;top:255px;width:862px;height:10px;background:#f0f0f0;"></div>
<svg class="r" style="left:256px;top:257px;" width="4" height="5" viewBox="0 0 4 5"><path d="M0.5 0.5 L3 2.5 L0.5 4.5 Z" fill="none" stroke="#b0b0b0" stroke-width="0.6"/></svg>
<div class="t" style="left:264.80px;top:256.21px;font-size:7px;color:#2a2a2a;font-weight:bold;transform:scaleX(0.9600);">Image Processing and Reading (LIST)</div>
<svg class="r" style="left:1106px;top:256px;" width="8" height="8" viewBox="0 0 8 8"><rect x="0" y="0" width="8" height="8" fill="#e4e4e4"/><polygon points="4,0.5 5,3 7.7,3.1 5.6,4.8 6.3,7.5 4,6 1.7,7.5 2.4,4.8 0.3,3.1 3,3" fill="#f2d22a"/><circle cx="2.5" cy="2.5" r="1.8" fill="#f07a3a"/></svg>
<div class="r" style="left:253px;top:265px;width:862px;height:10px;background:#f0f0f0;"></div>
<svg class="r" style="left:256px;top:266px;" width="4" height="4" viewBox="0 0 4 4"><path d="M3.5 0.5 V3.5 H0.5 Z" fill="#8a8a8a"/></svg>
<div class="t" style="left:264.80px;top:265.94px;font-size:7px;color:#2a2a2a;font-weight:bold;transform:scaleX(0.9600);">Split Batches / Documents</div>
<div class="r" style="left:253px;top:275px;width:862px;height:10px;background:#f0f0f0;"></div>
<svg class="r" style="left:266px;top:276px;" width="4" height="4" viewBox="0 0 4 4"><path d="M3.5 0.5 V3.5 H0.5 Z" fill="#8a8a8a"/></svg>
<div class="t" style="left:274.60px;top:275.67px;font-size:7px;color:#2a2a2a;font-weight:bold;transform:scaleX(0.9600);">Split by counters</div>
<div class="r" style="left:273px;top:285px;width:842px;height:9px;background:#ffffff;border-bottom:1px solid #f0f0f0;"></div>
<div class="r" style="left:253px;top:285px;width:20px;height:9px;background:#f0f0f0;"></div>
<div class="t" style="left:275.00px;top:285.40px;font-size:7px;color:#404040;transform:scaleX(0.8600);">Split document every x images</div>
<svg class="r" style="left:681px;top:287px;" width="7" height="6" viewBox="0 0 7 6"><path d="M4.5 0.5 H0.5 V5.5 H5.5 V3" fill="none" stroke="#777" stroke-width="0.7"/><path d="M3 3 L6 5.5" stroke="#777" stroke-width="0.7"/></svg>
<div class="r" style="left:689px;top:285px;width:1px;height:9px;background:#f0f0f0;"></div>
<div class="t" style="left:692.00px;top:285.40px;font-size:7px;color:#333333;transform:scaleX(0.8600);">Activated</div>
<div class="r" style="left:273px;top:294px;width:842px;height:10px;background:#ffffff;border-bottom:1px solid #f0f0f0;"></div>
<div class="r" style="left:253px;top:294px;width:20px;height:10px;background:#f0f0f0;"></div>
<div class="t" style="left:275.00px;top:295.13px;font-size:7px;color:#404040;transform:scaleX(0.8600);">Number of images</div>
<svg class="r" style="left:681px;top:296px;" width="7" height="6" viewBox="0 0 7 6"><path d="M4.5 0.5 H0.5 V5.5 H5.5 V3" fill="none" stroke="#777" stroke-width="0.7"/><path d="M3 3 L6 5.5" stroke="#777" stroke-width="0.7"/></svg>
<div class="r" style="left:689px;top:294px;width:1px;height:10px;background:#f0f0f0;"></div>
<div class="t" style="left:692.00px;top:295.13px;font-size:7px;color:#333333;transform:scaleX(0.8600);">1</div>
<div class="r" style="left:253px;top:304px;width:862px;height:10px;background:#f0f0f0;"></div>
<svg class="r" style="left:256px;top:305px;" width="4" height="4" viewBox="0 0 4 4"><path d="M3.5 0.5 V3.5 H0.5 Z" fill="#8a8a8a"/></svg>
<div class="t" style="left:264.80px;top:304.86px;font-size:7px;color:#2a2a2a;font-weight:bold;transform:scaleX(0.9600);">Options</div>
<div class="r" style="left:263px;top:314px;width:852px;height:9px;background:#ffffff;border-bottom:1px solid #f0f0f0;"></div>
<div class="t" style="left:265.00px;top:314.59px;font-size:7px;color:#404040;transform:scaleX(0.8600);">Validate when load batch</div>
<svg class="r" style="left:681px;top:316px;" width="7" height="6" viewBox="0 0 7 6"><path d="M4.5 0.5 H0.5 V5.5 H5.5 V3" fill="none" stroke="#777" stroke-width="0.7"/><path d="M3 3 L6 5.5" stroke="#777" stroke-width="0.7"/></svg>
<div class="r" style="left:689px;top:314px;width:1px;height:9px;background:#f0f0f0;"></div>
<div class="t" style="left:692.00px;top:314.59px;font-size:7px;color:#333333;transform:scaleX(0.8600);">Activated</div>
<div class="r" style="left:263px;top:323px;width:852px;height:10px;background:#ffffff;border-bottom:1px solid #f0f0f0;"></div>
<div class="t" style="left:265.00px;top:324.32px;font-size:7px;color:#404040;transform:scaleX(0.8600);">Capture date format</div>
<svg class="r" style="left:681px;top:325px;" width="7" height="6" viewBox="0 0 7 6"><path d="M4.5 0.5 H0.5 V5.5 H5.5 V3" fill="none" stroke="#777" stroke-width="0.7"/><path d="M3 3 L6 5.5" stroke="#777" stroke-width="0.7"/></svg>
<div class="r" style="left:689px;top:323px;width:1px;height:10px;background:#f0f0f0;"></div>
<div class="t" style="left:692.00px;top:324.32px;font-size:7px;color:#333333;transform:scaleX(0.8600);">dd/MM/yyyy</div>
<div class="r" style="left:263px;top:333px;width:852px;height:10px;background:#ffffff;border-bottom:1px solid #f0f0f0;"></div>
<div class="t" style="left:265.00px;top:334.05px;font-size:7px;color:#404040;transform:scaleX(0.8600);">Batch processor version.</div>
<svg class="r" style="left:681px;top:335px;" width="7" height="6" viewBox="0 0 7 6"><path d="M4.5 0.5 H0.5 V5.5 H5.5 V3" fill="none" stroke="#777" stroke-width="0.7"/><path d="M3 3 L6 5.5" stroke="#777" stroke-width="0.7"/></svg>
<div class="r" style="left:689px;top:333px;width:1px;height:10px;background:#f0f0f0;"></div>
<div class="t" style="left:692.00px;top:334.05px;font-size:7px;color:#333333;transform:scaleX(0.8600);">2</div>
<div class="r" style="left:263px;top:343px;width:852px;height:10px;background:#ffffff;border-bottom:1px solid #f0f0f0;"></div>
<div class="t" style="left:265.00px;top:343.78px;font-size:7px;color:#404040;transform:scaleX(0.8600);">Sort words from OCR/pdf text layer</div>
<svg class="r" style="left:681px;top:345px;" width="7" height="6" viewBox="0 0 7 6"><path d="M4.5 0.5 H0.5 V5.5 H5.5 V3" fill="none" stroke="#777" stroke-width="0.7"/><path d="M3 3 L6 5.5" stroke="#777" stroke-width="0.7"/></svg>
<div class="r" style="left:689px;top:343px;width:1px;height:10px;background:#f0f0f0;"></div>
<div class="t" style="left:692.00px;top:343.78px;font-size:7px;color:#333333;transform:scaleX(0.8600);">Activated</div>
<div class="r" style="left:263px;top:353px;width:852px;height:9px;background:#ffffff;border-bottom:1px solid #f0f0f0;"></div>
<div class="t" style="left:265.00px;top:353.51px;font-size:7px;color:#404040;transform:scaleX(0.8600);">Batch log</div>
<svg class="r" style="left:681px;top:355px;" width="7" height="6" viewBox="0 0 7 6"><path d="M4.5 0.5 H0.5 V5.5 H5.5 V3" fill="none" stroke="#777" stroke-width="0.7"/><path d="M3 3 L6 5.5" stroke="#777" stroke-width="0.7"/></svg>
<div class="r" style="left:689px;top:353px;width:1px;height:9px;background:#f0f0f0;"></div>
<div class="t" style="left:692.00px;top:353.51px;font-size:7px;color:#333333;transform:scaleX(0.8600);">Activated</div>
<div class="r" style="left:253px;top:362px;width:862px;height:10px;background:#f0f0f0;"></div>
<svg class="r" style="left:256px;top:364px;" width="4" height="4" viewBox="0 0 4 4"><path d="M3.5 0.5 V3.5 H0.5 Z" fill="#8a8a8a"/></svg>
<div class="t" style="left:264.80px;top:363.24px;font-size:7px;color:#2a2a2a;font-weight:bold;transform:scaleX(0.9600);">Image Options</div>
<div class="r" style="left:263px;top:372px;width:852px;height:10px;background:#ffffff;border-bottom:1px solid #f0f0f0;"></div>
<div class="t" style="left:265.00px;top:372.97px;font-size:7px;color:#404040;transform:scaleX(0.8600);">ZOOM Variable Field Name</div>
<svg class="r" style="left:681px;top:374px;" width="7" height="6" viewBox="0 0 7 6"><path d="M4.5 0.5 H0.5 V5.5 H5.5 V3" fill="none" stroke="#777" stroke-width="0.7"/><path d="M3 3 L6 5.5" stroke="#777" stroke-width="0.7"/></svg>
<div class="r" style="left:689px;top:372px;width:1px;height:10px;background:#f0f0f0;"></div>
<div class="t" style="left:692.00px;top:372.97px;font-size:7px;color:#333333;transform:scaleX(0.8600);">zoom</div>
<div class="r" style="left:253px;top:382px;width:862px;height:10px;background:#f0f0f0;"></div>
<svg class="r" style="left:256px;top:383px;" width="4" height="4" viewBox="0 0 4 4"><path d="M3.5 0.5 V3.5 H0.5 Z" fill="#8a8a8a"/></svg>
<div class="t" style="left:264.80px;top:382.70px;font-size:7px;color:#2a2a2a;font-weight:bold;transform:scaleX(0.9600);">Processing options</div>
<div class="r" style="left:263px;top:392px;width:852px;height:9px;background:#ffffff;border-bottom:1px solid #f0f0f0;"></div>
<div class="t" style="left:265.00px;top:392.43px;font-size:7px;color:#404040;transform:scaleX(0.8600);">Process ignored documents</div>
<svg class="r" style="left:681px;top:394px;" width="7" height="6" viewBox="0 0 7 6"><path d="M4.5 0.5 H0.5 V5.5 H5.5 V3" fill="none" stroke="#777" stroke-width="0.7"/><path d="M3 3 L6 5.5" stroke="#777" stroke-width="0.7"/></svg>
<div class="r" style="left:689px;top:392px;width:1px;height:9px;background:#f0f0f0;"></div>
<div class="t" style="left:692.00px;top:392.43px;font-size:7px;color:#333333;transform:scaleX(0.8600);">false</div>
<div class="r" style="left:253px;top:401px;width:862px;height:10px;background:#f0f0f0;"></div>
<svg class="r" style="left:256px;top:403px;" width="4" height="4" viewBox="0 0 4 4"><path d="M3.5 0.5 V3.5 H0.5 Z" fill="#8a8a8a"/></svg>
<div class="t" style="left:264.80px;top:402.16px;font-size:7px;color:#2a2a2a;font-weight:bold;transform:scaleX(0.9600);">Export options</div>
<div class="r" style="left:263px;top:411px;width:852px;height:10px;background:#ffffff;border-bottom:1px solid #f0f0f0;"></div>
<div class="t" style="left:265.00px;top:411.89px;font-size:7px;color:#404040;transform:scaleX(0.8600);">Prevent to export batches with errors</div>
<svg class="r" style="left:681px;top:413px;" width="7" height="6" viewBox="0 0 7 6"><path d="M4.5 0.5 H0.5 V5.5 H5.5 V3" fill="none" stroke="#777" stroke-width="0.7"/><path d="M3 3 L6 5.5" stroke="#777" stroke-width="0.7"/></svg>
<div class="r" style="left:689px;top:411px;width:1px;height:10px;background:#f0f0f0;"></div>
<div class="t" style="left:692.00px;top:411.89px;font-size:7px;color:#333333;transform:scaleX(0.8600);">Activated</div>
<div class="r" style="left:263px;top:421px;width:852px;height:10px;background:#ffffff;border-bottom:1px solid #f0f0f0;"></div>
<div class="t" style="left:265.00px;top:421.62px;font-size:7px;color:#404040;transform:scaleX(0.8600);">All pages must have OCR done.</div>
<svg class="r" style="left:681px;top:423px;" width="7" height="6" viewBox="0 0 7 6"><path d="M4.5 0.5 H0.5 V5.5 H5.5 V3" fill="none" stroke="#777" stroke-width="0.7"/><path d="M3 3 L6 5.5" stroke="#777" stroke-width="0.7"/></svg>
<div class="r" style="left:689px;top:421px;width:1px;height:10px;background:#f0f0f0;"></div>
<div class="t" style="left:692.00px;top:421.62px;font-size:7px;color:#333333;transform:scaleX(0.8600);">Activated</div>
<div class="r" style="left:263px;top:431px;width:852px;height:9px;background:#ffffff;border-bottom:1px solid #f0f0f0;"></div>
<div class="t" style="left:265.00px;top:431.35px;font-size:7px;color:#404040;transform:scaleX(0.8600);">Validate before export</div>
<svg class="r" style="left:681px;top:433px;" width="7" height="6" viewBox="0 0 7 6"><path d="M4.5 0.5 H0.5 V5.5 H5.5 V3" fill="none" stroke="#777" stroke-width="0.7"/><path d="M3 3 L6 5.5" stroke="#777" stroke-width="0.7"/></svg>
<div class="r" style="left:689px;top:431px;width:1px;height:9px;background:#f0f0f0;"></div>
<div class="t" style="left:692.00px;top:431.35px;font-size:7px;color:#333333;transform:scaleX(0.8600);">Activated</div>
<div class="r" style="left:253px;top:440px;width:862px;height:10px;background:#f0f0f0;"></div>
<svg class="r" style="left:266px;top:442px;" width="4" height="4" viewBox="0 0 4 4"><path d="M3.5 0.5 V3.5 H0.5 Z" fill="#8a8a8a"/></svg>
<div class="t" style="left:274.60px;top:441.08px;font-size:7px;color:#2a2a2a;font-weight:bold;transform:scaleX(0.9600);">Output formats (conversions)</div>
<svg class="r" style="left:1106px;top:441px;" width="8" height="8" viewBox="0 0 8 8"><rect x="0" y="0" width="8" height="8" fill="#e4e4e4"/><polygon points="4,0.5 5,3 7.7,3.1 5.6,4.8 6.3,7.5 4,6 1.7,7.5 2.4,4.8 0.3,3.1 3,3" fill="#f2d22a"/><circle cx="2.5" cy="2.5" r="1.8" fill="#f07a3a"/></svg>
<div class="r" style="left:273px;top:450px;width:842px;height:10px;background:#ffffff;border-bottom:1px solid #f0f0f0;"></div>
<div class="r" style="left:253px;top:450px;width:20px;height:10px;background:#f0f0f0;"></div>
<div class="t" style="left:275.00px;top:450.81px;font-size:7px;color:#404040;transform:scaleX(0.8600);">ScannedImageFormat</div>
<svg class="r" style="left:681px;top:452px;" width="7" height="6" viewBox="0 0 7 6"><path d="M4.5 0.5 H0.5 V5.5 H5.5 V3" fill="none" stroke="#777" stroke-width="0.7"/><path d="M3 3 L6 5.5" stroke="#777" stroke-width="0.7"/></svg>
<div class="r" style="left:689px;top:450px;width:1px;height:10px;background:#f0f0f0;"></div>
<svg class="r" style="left:1096px;top:451px;" width="8" height="8" viewBox="0 0 8 8"><circle cx="4" cy="4" r="3.2" fill="#d8daf0" stroke="#8c90cc" stroke-width="1.1" stroke-dasharray="1.2 0.6"/><path d="M2.5 4.5 L5 2.5" stroke="#6a70b8" stroke-width="0.6"/></svg>
<svg class="r" style="left:1106px;top:451px;" width="8" height="8" viewBox="0 0 8 8"><path d="M1.2 1.2 L6.8 6.8 M6.8 1.2 L1.2 6.8" stroke="#e8281e" stroke-width="2.2" stroke-linecap="round"/></svg>
<div class="r" style="left:273px;top:460px;width:842px;height:9px;background:#ffffff;border-bottom:1px solid #f0f0f0;"></div>
<div class="r" style="left:253px;top:460px;width:20px;height:9px;background:#f0f0f0;"></div>
<div class="t" style="left:275.00px;top:460.54px;font-size:7px;color:#404040;transform:scaleX(0.8600);">TXT Report</div>
<svg class="r" style="left:681px;top:462px;" width="7" height="6" viewBox="0 0 7 6"><path d="M4.5 0.5 H0.5 V5.5 H5.5 V3" fill="none" stroke="#777" stroke-width="0.7"/><path d="M3 3 L6 5.5" stroke="#777" stroke-width="0.7"/></svg>
<div class="r" style="left:689px;top:460px;width:1px;height:9px;background:#f0f0f0;"></div>
<div class="r" style="left:692px;top:460px;width:303.0px;height:9px;overflow:hidden;">
<div class="t" style="left:91.0px;top:0.14px;font-size:7px;color:#333;transform:scaleX(0.86);">name=&quot;TXT Report&quot; description=&quot;&quot; source=&quot;ScannedImageFormat&quot; source_fil...</div></div>
<svg class="r" style="left:1096px;top:461px;" width="8" height="8" viewBox="0 0 8 8"><circle cx="4" cy="4" r="3.2" fill="#d8daf0" stroke="#8c90cc" stroke-width="1.1" stroke-dasharray="1.2 0.6"/><path d="M2.5 4.5 L5 2.5" stroke="#6a70b8" stroke-width="0.6"/></svg>
<svg class="r" style="left:1106px;top:461px;" width="8" height="8" viewBox="0 0 8 8"><path d="M1.2 1.2 L6.8 6.8 M6.8 1.2 L1.2 6.8" stroke="#e8281e" stroke-width="2.2" stroke-linecap="round"/></svg>
<div class="r" style="left:273px;top:469px;width:842px;height:10px;background:#ffffff;border-bottom:1px solid #f0f0f0;"></div>
<div class="r" style="left:253px;top:469px;width:20px;height:10px;background:#f0f0f0;"></div>
<div class="t" style="left:275.00px;top:470.27px;font-size:7px;color:#404040;transform:scaleX(0.8600);">Nuance PDF Text</div>
<svg class="r" style="left:681px;top:471px;" width="7" height="6" viewBox="0 0 7 6"><path d="M4.5 0.5 H0.5 V5.5 H5.5 V3" fill="none" stroke="#777" stroke-width="0.7"/><path d="M3 3 L6 5.5" stroke="#777" stroke-width="0.7"/></svg>
<div class="r" style="left:689px;top:469px;width:1px;height:10px;background:#f0f0f0;"></div>
<div class="r" style="left:692px;top:469px;width:307.7px;height:10px;overflow:hidden;">
<div class="t" style="left:131.6px;top:0.87px;font-size:7px;color:#333;transform:scaleX(0.86);">name=&quot;Nuance PDF Text&quot; description=&quot;&quot; source=&quot;ScannedImag...</div></div>
<svg class="r" style="left:1096px;top:470px;" width="8" height="8" viewBox="0 0 8 8"><circle cx="4" cy="4" r="3.2" fill="#d8daf0" stroke="#8c90cc" stroke-width="1.1" stroke-dasharray="1.2 0.6"/><path d="M2.5 4.5 L5 2.5" stroke="#6a70b8" stroke-width="0.6"/></svg>
<svg class="r" style="left:1106px;top:470px;" width="8" height="8" viewBox="0 0 8 8"><path d="M1.2 1.2 L6.8 6.8 M6.8 1.2 L1.2 6.8" stroke="#e8281e" stroke-width="2.2" stroke-linecap="round"/></svg>
<div class="r" style="left:253px;top:479px;width:862px;height:10px;background:#f0f0f0;"></div>
<svg class="r" style="left:266px;top:481px;" width="4" height="4" viewBox="0 0 4 4"><path d="M3.5 0.5 V3.5 H0.5 Z" fill="#8a8a8a"/></svg>
<div class="t" style="left:274.60px;top:480.00px;font-size:7px;color:#2a2a2a;font-weight:bold;transform:scaleX(0.9600);">Output configuration (exports)</div>
<svg class="r" style="left:1106px;top:480px;" width="8" height="8" viewBox="0 0 8 8"><rect x="0" y="0" width="8" height="8" fill="#e4e4e4"/><polygon points="4,0.5 5,3 7.7,3.1 5.6,4.8 6.3,7.5 4,6 1.7,7.5 2.4,4.8 0.3,3.1 3,3" fill="#f2d22a"/><circle cx="2.5" cy="2.5" r="1.8" fill="#f07a3a"/></svg>
<div class="r" style="left:273px;top:489px;width:842px;height:10px;background:#ffffff;border-bottom:1px solid #f0f0f0;"></div>
<div class="r" style="left:253px;top:489px;width:20px;height:10px;background:#f0f0f0;"></div>
<div class="t" style="left:275.00px;top:489.73px;font-size:7px;color:#404040;transform:scaleX(0.8600);">TXT Report to File System</div>
<svg class="r" style="left:681px;top:491px;" width="7" height="6" viewBox="0 0 7 6"><path d="M4.5 0.5 H0.5 V5.5 H5.5 V3" fill="none" stroke="#777" stroke-width="0.7"/><path d="M3 3 L6 5.5" stroke="#777" stroke-width="0.7"/></svg>
<div class="r" style="left:689px;top:489px;width:1px;height:10px;background:#f0f0f0;"></div>
<div class="r" style="left:692px;top:489px;width:298.0px;height:10px;overflow:hidden;">
<div class="t" style="left:124.4px;top:0.33px;font-size:7px;color:#333;transform:scaleX(0.86);">name=&quot;TXT Report to File System&quot; source=&quot;TXT Report&quot; sourc...</div></div>
<svg class="r" style="left:1096px;top:490px;" width="8" height="8" viewBox="0 0 8 8"><circle cx="4" cy="4" r="3.2" fill="#d8daf0" stroke="#8c90cc" stroke-width="1.1" stroke-dasharray="1.2 0.6"/><path d="M2.5 4.5 L5 2.5" stroke="#6a70b8" stroke-width="0.6"/></svg>
<svg class="r" style="left:1106px;top:490px;" width="8" height="8" viewBox="0 0 8 8"><path d="M1.2 1.2 L6.8 6.8 M6.8 1.2 L1.2 6.8" stroke="#e8281e" stroke-width="2.2" stroke-linecap="round"/></svg>
<div class="r" style="left:273px;top:499px;width:842px;height:9px;background:#ffffff;border-bottom:1px solid #f0f0f0;"></div>
<div class="r" style="left:253px;top:499px;width:20px;height:9px;background:#f0f0f0;"></div>
<div class="t" style="left:275.00px;top:499.46px;font-size:7px;color:#404040;transform:scaleX(0.8600);">File System</div>
<svg class="r" style="left:681px;top:501px;" width="7" height="6" viewBox="0 0 7 6"><path d="M4.5 0.5 H0.5 V5.5 H5.5 V3" fill="none" stroke="#777" stroke-width="0.7"/><path d="M3 3 L6 5.5" stroke="#777" stroke-width="0.7"/></svg>
<div class="r" style="left:689px;top:499px;width:1px;height:9px;background:#f0f0f0;"></div>
<div class="r" style="left:692px;top:499px;width:295.6px;height:9px;overflow:hidden;">
<div class="t" style="left:124.2px;top:0.06px;font-size:7px;color:#333;transform:scaleX(0.86);">name=&quot;File System&quot; source=&quot;Nuance PDF Text&quot; source_filters...</div></div>
<svg class="r" style="left:1096px;top:500px;" width="8" height="8" viewBox="0 0 8 8"><circle cx="4" cy="4" r="3.2" fill="#d8daf0" stroke="#8c90cc" stroke-width="1.1" stroke-dasharray="1.2 0.6"/><path d="M2.5 4.5 L5 2.5" stroke="#6a70b8" stroke-width="0.6"/></svg>
<svg class="r" style="left:1106px;top:500px;" width="8" height="8" viewBox="0 0 8 8"><path d="M1.2 1.2 L6.8 6.8 M6.8 1.2 L1.2 6.8" stroke="#e8281e" stroke-width="2.2" stroke-linecap="round"/></svg>
<div class="r" style="left:253px;top:508px;width:862px;height:10px;background:#f0f0f0;"></div>
<svg class="r" style="left:256px;top:510px;" width="4" height="4" viewBox="0 0 4 4"><path d="M3.5 0.5 V3.5 H0.5 Z" fill="#8a8a8a"/></svg>
<div class="t" style="left:264.80px;top:509.19px;font-size:7px;color:#2a2a2a;font-weight:bold;transform:scaleX(0.9600);">Program options overwritten for this job</div>
<div class="r" style="left:263px;top:518px;width:852px;height:10px;background:#ffffff;border-bottom:1px solid #f0f0f0;"></div>
<div class="t" style="left:265.00px;top:518.92px;font-size:7px;color:#404040;transform:scaleX(0.8600);">RenderWith_gswin32c</div>
<svg class="r" style="left:681px;top:520px;" width="7" height="6" viewBox="0 0 7 6"><path d="M4.5 0.5 H0.5 V5.5 H5.5 V3" fill="none" stroke="#777" stroke-width="0.7"/><path d="M3 3 L6 5.5" stroke="#777" stroke-width="0.7"/></svg>
<div class="r" style="left:689px;top:518px;width:1px;height:10px;background:#f0f0f0;"></div>
<div class="t" style="left:692.00px;top:518.92px;font-size:7px;color:#333333;transform:scaleX(0.8600);">default</div>
<div class="r" style="left:253px;top:528px;width:862px;height:10px;background:#f0f0f0;"></div>
<svg class="r" style="left:256px;top:529px;" width="4" height="4" viewBox="0 0 4 4"><path d="M3.5 0.5 V3.5 H0.5 Z" fill="#8a8a8a"/></svg>
<div class="t" style="left:264.80px;top:528.65px;font-size:7px;color:#2a2a2a;font-weight:bold;transform:scaleX(0.9600);">Options for batch deletion</div>
<div class="r" style="left:263px;top:538px;width:852px;height:9px;background:#ffffff;border-bottom:1px solid #f0f0f0;"></div>
<div class="t" style="left:265.00px;top:538.38px;font-size:7px;color:#404040;transform:scaleX(0.8600);">Cancel batch deletion if any of its files cannot be deleted</div>
<svg class="r" style="left:681px;top:540px;" width="7" height="6" viewBox="0 0 7 6"><path d="M4.5 0.5 H0.5 V5.5 H5.5 V3" fill="none" stroke="#777" stroke-width="0.7"/><path d="M3 3 L6 5.5" stroke="#777" stroke-width="0.7"/></svg>
<div class="r" style="left:689px;top:538px;width:1px;height:9px;background:#f0f0f0;"></div>
<div class="t" style="left:692.00px;top:538.38px;font-size:7px;color:#333333;transform:scaleX(0.8600);">false</div>
<div class="r" style="left:263px;top:547px;width:852px;height:10px;background:#ffffff;border-bottom:1px solid #f0f0f0;"></div>
<div class="t" style="left:265.00px;top:548.11px;font-size:7px;color:#404040;transform:scaleX(0.8600);">Delete export reports when deleting batches</div>
<svg class="r" style="left:681px;top:549px;" width="7" height="6" viewBox="0 0 7 6"><path d="M4.5 0.5 H0.5 V5.5 H5.5 V3" fill="none" stroke="#777" stroke-width="0.7"/><path d="M3 3 L6 5.5" stroke="#777" stroke-width="0.7"/></svg>
<div class="r" style="left:689px;top:547px;width:1px;height:10px;background:#f0f0f0;"></div>
<div class="t" style="left:692.00px;top:548.11px;font-size:7px;color:#333333;transform:scaleX(0.8600);">false</div>
<div class="r" style="left:253px;top:557px;width:862px;height:10px;background:#f0f0f0;"></div>
<svg class="r" style="left:256px;top:558px;" width="4" height="4" viewBox="0 0 4 4"><path d="M3.5 0.5 V3.5 H0.5 Z" fill="#8a8a8a"/></svg>
<div class="t" style="left:264.80px;top:557.84px;font-size:7px;color:#2a2a2a;font-weight:bold;transform:scaleX(0.9600);">Image viewer settings</div>
<div class="r" style="left:263px;top:567px;width:852px;height:9px;background:#ffffff;border-bottom:1px solid #f0f0f0;"></div>
<div class="t" style="left:265.00px;top:567.57px;font-size:7px;color:#404040;transform:scaleX(0.8600);">Page menu (onMouseOver)</div>
<svg class="r" style="left:681px;top:569px;" width="7" height="6" viewBox="0 0 7 6"><path d="M4.5 0.5 H0.5 V5.5 H5.5 V3" fill="none" stroke="#777" stroke-width="0.7"/><path d="M3 3 L6 5.5" stroke="#777" stroke-width="0.7"/></svg>
<div class="r" style="left:689px;top:567px;width:1px;height:9px;background:#f0f0f0;"></div>
<div class="t" style="left:692.00px;top:567.57px;font-size:7px;color:#333;transform:scaleX(0.8666);">Set up actions...</div>
<svg class="r" style="left:1106px;top:568px;" width="8" height="8" viewBox="0 0 8 8"><circle cx="4" cy="4" r="3.2" fill="#d8daf0" stroke="#8c90cc" stroke-width="1.1" stroke-dasharray="1.2 0.6"/></svg>
<div class="r" style="left:253px;top:576px;width:862px;height:10px;background:#f0f0f0;"></div>
<svg class="r" style="left:256px;top:578px;" width="4" height="4" viewBox="0 0 4 4"><path d="M3.5 0.5 V3.5 H0.5 Z" fill="#8a8a8a"/></svg>
<div class="t" style="left:264.80px;top:577.30px;font-size:7px;color:#2a2a2a;font-weight:bold;transform:scaleX(0.9600);">Batches labeling</div>
<div class="r" style="left:253px;top:586px;width:862px;height:10px;background:#f0f0f0;"></div>
<svg class="r" style="left:266px;top:588px;" width="4" height="4" viewBox="0 0 4 4"><path d="M3.5 0.5 V3.5 H0.5 Z" fill="#8a8a8a"/></svg>
<div class="t" style="left:274.50px;top:586.04px;font-size:7.8px;color:#2a2a2a;font-weight:bold;transform:scaleX(0.8962);">AP ENGLISH</div>
<svg class="r" style="left:1106px;top:587px;" width="8" height="8" viewBox="0 0 8 8"><path d="M1.2 1.2 L6.8 6.8 M6.8 1.2 L1.2 6.8" stroke="#f0a020" stroke-width="2" stroke-linecap="round"/></svg>
<div class="r" style="left:273px;top:596px;width:842px;height:10px;background:#ffffff;border-bottom:1px solid #f0f0f0;"></div>
<div class="r" style="left:253px;top:596px;width:20px;height:10px;background:#f0f0f0;"></div>
<div class="t" style="left:275.00px;top:596.76px;font-size:7px;color:#aaaaaa;transform:scaleX(0.8600);">Tag name</div>
<svg class="r" style="left:681px;top:598px;" width="7" height="6" viewBox="0 0 7 6"><path d="M4.5 0.5 H0.5 V5.5 H5.5 V3" fill="none" stroke="#777" stroke-width="0.7"/><path d="M3 3 L6 5.5" stroke="#777" stroke-width="0.7"/></svg>
<div class="r" style="left:689px;top:596px;width:1px;height:10px;background:#f0f0f0;"></div>
<div class="t" style="left:692.00px;top:596.76px;font-size:7px;color:#aaaaaa;transform:scaleX(0.8600);">AP ENGLISH</div>
<div class="r" style="left:273px;top:606px;width:842px;height:9px;background:#ffffff;border-bottom:1px solid #f0f0f0;"></div>
<div class="r" style="left:253px;top:606px;width:20px;height:9px;background:#f0f0f0;"></div>
<div class="t" style="left:275.00px;top:606.49px;font-size:7px;color:#aaaaaa;transform:scaleX(0.8600);">Style</div>
<svg class="r" style="left:681px;top:608px;" width="7" height="6" viewBox="0 0 7 6"><path d="M4.5 0.5 H0.5 V5.5 H5.5 V3" fill="none" stroke="#777" stroke-width="0.7"/><path d="M3 3 L6 5.5" stroke="#777" stroke-width="0.7"/></svg>
<div class="r" style="left:689px;top:606px;width:1px;height:9px;background:#f0f0f0;"></div>
<div class="t" style="left:692.00px;top:606.49px;font-size:7px;color:#aaaaaa;transform:scaleX(0.8600);">info</div>
<div class="r" style="left:273px;top:615px;width:842px;height:10px;background:#ffffff;border-bottom:1px solid #f0f0f0;"></div>
<div class="r" style="left:253px;top:615px;width:20px;height:10px;background:#f0f0f0;"></div>
<div class="t" style="left:275.00px;top:616.22px;font-size:7px;color:#404040;transform:scaleX(0.8600);">Bootstrap Color</div>
<svg class="r" style="left:681px;top:617px;" width="7" height="6" viewBox="0 0 7 6"><path d="M4.5 0.5 H0.5 V5.5 H5.5 V3" fill="none" stroke="#777" stroke-width="0.7"/><path d="M3 3 L6 5.5" stroke="#777" stroke-width="0.7"/></svg>
<div class="r" style="left:689px;top:615px;width:1px;height:10px;background:#f0f0f0;"></div>
<div class="r" style="left:691px;top:617px;width:7px;height:7px;background:#18c6ec;"></div>
<div class="t" style="left:701.40px;top:616.22px;font-size:7px;color:#333;transform:scaleX(0.8600);">0DCAF0</div>
<div class="r" style="left:273px;top:625px;width:842px;height:10px;background:#ffffff;border-bottom:1px solid #f0f0f0;"></div>
<div class="r" style="left:253px;top:625px;width:20px;height:10px;background:#f0f0f0;"></div>
<div class="t" style="left:275.00px;top:625.95px;font-size:7px;color:#aaaaaa;transform:scaleX(0.8600);">Assigned batches</div>
<svg class="r" style="left:681px;top:627px;" width="7" height="6" viewBox="0 0 7 6"><path d="M4.5 0.5 H0.5 V5.5 H5.5 V3" fill="none" stroke="#777" stroke-width="0.7"/><path d="M3 3 L6 5.5" stroke="#777" stroke-width="0.7"/></svg>
<div class="r" style="left:689px;top:625px;width:1px;height:10px;background:#f0f0f0;"></div>
<div class="t" style="left:692.00px;top:625.95px;font-size:7px;color:#aaaaaa;transform:scaleX(0.8600);">3</div>
<div class="r" style="left:689px;top:634px;width:1px;height:27px;background:#f0f0f0;"></div>
<div class="r" style="left:252px;top:661px;width:863px;height:1px;background:#e2e2e2;"></div>
<div class="r" style="left:252px;top:662px;width:875px;height:1px;background:#cfcfcf;"></div>
<div class="r" style="left:1115px;top:197px;width:12px;height:465px;background:#ffffff;"></div>
<div class="r" style="left:1116px;top:197px;width:10px;height:10px;background:#ffffff;border:1px solid #e0e0e0;"></div>
<svg class="r" style="left:1118px;top:200px;" width="6" height="4" viewBox="0 0 6 4"><path d="M0 3.5 L3 0.5 L6 3.5 Z" fill="#555"/></svg>
<div class="r" style="left:1116px;top:207px;width:10px;height:140px;background:#e3e3e3;"></div>
<div class="r" style="left:1116px;top:651px;width:10px;height:10px;background:#ffffff;border:1px solid #e0e0e0;"></div>
<svg class="r" style="left:1118px;top:654px;" width="6" height="4" viewBox="0 0 6 4"><path d="M0 0.5 L3 3.5 L6 0.5 Z" fill="#555"/></svg>
<div class="r" style="left:252px;top:663px;width:875px;height:33px;background:#efefef;"></div>
<div class="t" style="left:255.70px;top:664.78px;font-size:7px;color:#222;font-weight:bold;transform:scaleX(0.9666);">Page menu (onMouseOver)</div>
<div class="t" style="left:255.40px;top:674.48px;font-size:7px;color:#555;transform:scaleX(0.8745);">Choose which quick actions appear when you hover over the page thumbnail</div>
<div class="r" style="left:252px;top:695px;width:875px;height:1px;background:#dcdcdc;"></div>
<svg class="r" style="left:1119px;top:698px;" width="6" height="6" viewBox="0 0 6 6"><g fill="#b0b0b0"><rect x="4" y="0" width="1" height="1"/><rect x="2" y="2" width="1" height="1"/><rect x="4" y="2" width="1" height="1"/><rect x="0" y="4" width="1" height="1"/><rect x="2" y="4" width="1" height="1"/><rect x="4" y="4" width="1" height="1"/></g></svg>
<div class="r" style="left:508px;top:323px;width:364px;height:197px;background:#f0f0f0;border:1px solid #7ea9dc;box-shadow:0 8px 22px rgba(0,0,0,0.34);"></div>
<div class="r" style="left:509px;top:324px;width:362px;height:17px;background:#eef2f9;"></div>
<div class="t" style="left:513.30px;top:329.19px;font-size:7.6px;color:#222;transform:scaleX(0.8618);">Page menu</div>
<svg class="r" style="left:859px;top:328px;" width="8" height="8" viewBox="0 0 8 8"><path d="M0.7 0.7 L7.3 7.3 M7.3 0.7 L0.7 7.3" stroke="#333" stroke-width="0.9"/></svg>
<div class="t" style="left:514.60px;top:350.98px;font-size:7px;color:#444;transform:scaleX(0.8803);">Available options: Select menu actions. Up to 11 actions.</div>
<div class="t" style="left:514.60px;top:365.98px;font-size:7px;color:#555;transform:scaleX(0.8337);">Selected: 6/11.</div>
<div class="r" style="left:515px;top:384px;width:346px;height:111px;background:#f0f0f0;border:1px solid #a8a8a8;"></div>
<div class="r" style="left:516px;top:385px;width:334px;height:11px;background:#f0f0f0;"></div>
<div class="r" style="left:516px;top:396px;width:334px;height:1px;background:#c0c0c0;"></div>
<div class="t" style="left:528.00px;top:387.48px;font-size:7px;color:#222;transform:scaleX(0.7967);">Action</div>
<div class="r" style="left:657px;top:386px;width:1px;height:10px;background:#dadada;"></div>
<div class="t" style="left:660.00px;top:387.48px;font-size:7px;color:#222;transform:scaleX(0.8656);">Active</div>
<div class="r" style="left:697px;top:386px;width:1px;height:10px;background:#dadada;"></div>
<div class="r" style="left:516px;top:397px;width:334px;height:97px;background:#ffffff;"></div>
<div class="r" style="left:516px;top:397px;width:9px;height:97px;background:#f0f0f0;"></div>
<div class="r" style="left:850px;top:385px;width:10px;height:109px;background:#f0f0f0;"></div>
<div class="r" style="left:854px;top:401px;width:2px;height:84px;background:#a8a8a8;"></div>
<div class="r" style="left:525px;top:406px;width:172px;height:1px;background:#f0f0f0;"></div>
<div class="r" style="left:657px;top:397px;width:1px;height:10px;background:#f0f0f0;"></div>
<div class="r" style="left:697px;top:397px;width:1px;height:10px;background:#f0f0f0;"></div>
<div class="t" style="left:527.80px;top:398.82px;font-size:7px;color:#222;transform:scaleX(0.8668);">Split the document on this page</div>
<svg class="r" style="left:673px;top:398px;" width="8" height="8" viewBox="0 0 8 8"><rect x="0" y="0" width="8" height="8" rx="1.2" fill="#0a5fc8"/><path d="M2 4.2 L3.5 5.6 L6.2 2.6" stroke="#fff" stroke-width="0.9" fill="none"/></svg>
<div class="r" style="left:525px;top:415px;width:172px;height:1px;background:#f0f0f0;"></div>
<div class="r" style="left:657px;top:407px;width:1px;height:9px;background:#f0f0f0;"></div>
<div class="r" style="left:697px;top:407px;width:1px;height:9px;background:#f0f0f0;"></div>
<div class="t" style="left:527.80px;top:408.50px;font-size:7px;color:#222;transform:scaleX(0.8700);">Merge with previous</div>
<svg class="r" style="left:673px;top:408px;" width="8" height="8" viewBox="0 0 8 8"><rect x="0.5" y="0.5" width="7" height="7" rx="1.2" fill="#fff" stroke="#808080" stroke-width="0.8"/></svg>
<div class="r" style="left:525px;top:425px;width:172px;height:1px;background:#f0f0f0;"></div>
<div class="r" style="left:657px;top:416px;width:1px;height:10px;background:#f0f0f0;"></div>
<div class="r" style="left:697px;top:416px;width:1px;height:10px;background:#f0f0f0;"></div>
<div class="t" style="left:527.80px;top:418.18px;font-size:7px;color:#222;transform:scaleX(0.8700);">Merge with next</div>
<svg class="r" style="left:673px;top:418px;" width="8" height="8" viewBox="0 0 8 8"><rect x="0.5" y="0.5" width="7" height="7" rx="1.2" fill="#fff" stroke="#808080" stroke-width="0.8"/></svg>
<div class="r" style="left:525px;top:435px;width:172px;height:1px;background:#f0f0f0;"></div>
<div class="r" style="left:657px;top:426px;width:1px;height:10px;background:#f0f0f0;"></div>
<div class="r" style="left:697px;top:426px;width:1px;height:10px;background:#f0f0f0;"></div>
<div class="t" style="left:527.80px;top:427.86px;font-size:7px;color:#222;transform:scaleX(0.8700);">Delete page</div>
<svg class="r" style="left:673px;top:427px;" width="8" height="8" viewBox="0 0 8 8"><rect x="0.5" y="0.5" width="7" height="7" rx="1.2" fill="#fff" stroke="#808080" stroke-width="0.8"/></svg>
<div class="r" style="left:525px;top:444px;width:172px;height:1px;background:#f0f0f0;"></div>
<div class="r" style="left:657px;top:436px;width:1px;height:9px;background:#f0f0f0;"></div>
<div class="r" style="left:697px;top:436px;width:1px;height:9px;background:#f0f0f0;"></div>
<div class="t" style="left:527.80px;top:437.54px;font-size:7px;color:#222;transform:scaleX(0.8700);">Mark to ignore/not to ignore</div>
<svg class="r" style="left:673px;top:437px;" width="8" height="8" viewBox="0 0 8 8"><rect x="0" y="0" width="8" height="8" rx="1.2" fill="#0a5fc8"/><path d="M2 4.2 L3.5 5.6 L6.2 2.6" stroke="#fff" stroke-width="0.9" fill="none"/></svg>
<div class="r" style="left:525px;top:454px;width:172px;height:1px;background:#f0f0f0;"></div>
<div class="r" style="left:657px;top:445px;width:1px;height:10px;background:#f0f0f0;"></div>
<div class="r" style="left:697px;top:445px;width:1px;height:10px;background:#f0f0f0;"></div>
<div class="t" style="left:527.80px;top:447.22px;font-size:7px;color:#222;transform:scaleX(0.8700);">Change post-processed image</div>
<svg class="r" style="left:673px;top:447px;" width="8" height="8" viewBox="0 0 8 8"><rect x="0.5" y="0.5" width="7" height="7" rx="1.2" fill="#fff" stroke="#808080" stroke-width="0.8"/></svg>
<div class="r" style="left:525px;top:464px;width:172px;height:1px;background:#f0f0f0;"></div>
<div class="r" style="left:657px;top:455px;width:1px;height:10px;background:#f0f0f0;"></div>
<div class="r" style="left:697px;top:455px;width:1px;height:10px;background:#f0f0f0;"></div>
<div class="t" style="left:527.80px;top:456.90px;font-size:7px;color:#222;transform:scaleX(0.8700);">Rotate 90 deg. Right</div>
<svg class="r" style="left:673px;top:456px;" width="8" height="8" viewBox="0 0 8 8"><rect x="0" y="0" width="8" height="8" rx="1.2" fill="#0a5fc8"/><path d="M2 4.2 L3.5 5.6 L6.2 2.6" stroke="#fff" stroke-width="0.9" fill="none"/></svg>
<div class="r" style="left:525px;top:473px;width:172px;height:1px;background:#f0f0f0;"></div>
<div class="r" style="left:657px;top:465px;width:1px;height:9px;background:#f0f0f0;"></div>
<div class="r" style="left:697px;top:465px;width:1px;height:9px;background:#f0f0f0;"></div>
<div class="t" style="left:527.80px;top:466.58px;font-size:7px;color:#222;transform:scaleX(0.8700);">Rotate 90 deg. Left</div>
<svg class="r" style="left:673px;top:466px;" width="8" height="8" viewBox="0 0 8 8"><rect x="0" y="0" width="8" height="8" rx="1.2" fill="#0a5fc8"/><path d="M2 4.2 L3.5 5.6 L6.2 2.6" stroke="#fff" stroke-width="0.9" fill="none"/></svg>
<div class="r" style="left:525px;top:483px;width:172px;height:1px;background:#f0f0f0;"></div>
<div class="r" style="left:657px;top:474px;width:1px;height:10px;background:#f0f0f0;"></div>
<div class="r" style="left:697px;top:474px;width:1px;height:10px;background:#f0f0f0;"></div>
<div class="t" style="left:527.80px;top:476.26px;font-size:7px;color:#222;transform:scaleX(0.8700);">Rotate 180 deg.</div>
<svg class="r" style="left:673px;top:476px;" width="8" height="8" viewBox="0 0 8 8"><rect x="0" y="0" width="8" height="8" rx="1.2" fill="#0a5fc8"/><path d="M2 4.2 L3.5 5.6 L6.2 2.6" stroke="#fff" stroke-width="0.9" fill="none"/></svg>
<div class="r" style="left:525px;top:493px;width:172px;height:1px;background:#f0f0f0;"></div>
<div class="r" style="left:657px;top:484px;width:1px;height:10px;background:#f0f0f0;"></div>
<div class="r" style="left:697px;top:484px;width:1px;height:10px;background:#f0f0f0;"></div>
<div class="t" style="left:527.80px;top:485.94px;font-size:7px;color:#222;transform:scaleX(0.8700);">Page bookmarks</div>
<svg class="r" style="left:673px;top:485px;" width="8" height="8" viewBox="0 0 8 8"><rect x="0" y="0" width="8" height="8" rx="1.2" fill="#0a5fc8"/><path d="M2 4.2 L3.5 5.6 L6.2 2.6" stroke="#fff" stroke-width="0.9" fill="none"/></svg>
<div class="r" style="left:808px;top:499px;width:56px;height:14px;background:#ffffff;border:1px solid #4a8ee0;"></div>
<div class="t" style="left:814.75px;top:503.78px;font-size:7px;color:#444;transform:scaleX(0.8879);">Save and close</div>
<div class="r" style="left:499px;top:315px;width:382px;height:216px;border:2px solid #8a0e1c;"></div>
<div class="r" style="left:250px;top:555px;width:869px;height:24px;border:2px solid #8a0e1c;"></div>
<svg class="r" style="left:0px;top:0px;pointer-events:none;" width="1464" height="796" viewBox="0 0 1464 796"><line x1="1089" y1="571.5" x2="858" y2="455.5" stroke="#8a0e1c" stroke-width="2.8" stroke-linecap="round"/><polygon points="849.3,450.6 863.3,451.8 857.8,461" fill="#8a0e1c"/></svg>
<div class="r" style="left:57.5px;top:49.599999999999994px;width:26.6px;height:26.6px;border-radius:50%;background:rgba(246,246,40,0.72);"></div>
<svg class="r" style="left:65px;top:56px;" width="13" height="15" viewBox="0 0 13 15"><g transform="scale(1.25)"><path d="M3 1.2 A0.9 0.9 0 0 1 4.8 1.2 V5 L5 4.6 A0.9 0.9 0 0 1 6.6 5.2 A0.9 0.9 0 0 1 8.2 5.8 A0.9 0.9 0 0 1 9.5 6.6 V9 Q9.5 11.3 7.2 11.3 H5 Q3.8 11.3 3 10.2 L0.8 7 A0.9 0.9 0 0 1 2.3 6 L3 7 Z" fill="#fff" stroke="#555" stroke-width="0.6"/></g></svg>
<div class="r" style="left:75px;top:67.4px;width:22px;height:22px;border-radius:50%;background:#4b80bb;border:2px solid #fff;box-shadow:0 0.5px 1.5px rgba(0,0,0,0.3);"></div>
<div class="t" style="left:82.75px;top:72.99px;font-size:12.3px;color:#ffffff;font-weight:bold;transform:scaleX(0.9500);">2</div>
<div class="r" style="left:170.39999999999998px;top:121.3px;width:26.6px;height:26.6px;border-radius:50%;background:rgba(246,246,40,0.72);"></div>
<svg class="r" style="left:178px;top:128px;" width="13" height="15" viewBox="0 0 13 15"><g transform="scale(1.25)"><path d="M3 1.2 A0.9 0.9 0 0 1 4.8 1.2 V5 L5 4.6 A0.9 0.9 0 0 1 6.6 5.2 A0.9 0.9 0 0 1 8.2 5.8 A0.9 0.9 0 0 1 9.5 6.6 V9 Q9.5 11.3 7.2 11.3 H5 Q3.8 11.3 3 10.2 L0.8 7 A0.9 0.9 0 0 1 2.3 6 L3 7 Z" fill="#fff" stroke="#555" stroke-width="0.6"/></g></svg>
<div class="r" style="left:191.6px;top:137.3px;width:22px;height:22px;border-radius:50%;background:#4b80bb;border:2px solid #fff;box-shadow:0 0.5px 1.5px rgba(0,0,0,0.3);"></div>
<div class="t" style="left:199.35px;top:142.89px;font-size:12.3px;color:#ffffff;font-weight:bold;transform:scaleX(0.9500);">1</div>
<div class="r" style="left:1097.6000000000001px;top:569.9000000000001px;width:26.6px;height:26.6px;border-radius:50%;background:rgba(246,246,40,0.72);"></div>
<svg class="r" style="left:1106px;top:577px;" width="13" height="15" viewBox="0 0 13 15"><g transform="scale(1.25)"><path d="M3 1.2 A0.9 0.9 0 0 1 4.8 1.2 V5 L5 4.6 A0.9 0.9 0 0 1 6.6 5.2 A0.9 0.9 0 0 1 8.2 5.8 A0.9 0.9 0 0 1 9.5 6.6 V9 Q9.5 11.3 7.2 11.3 H5 Q3.8 11.3 3 10.2 L0.8 7 A0.9 0.9 0 0 1 2.3 6 L3 7 Z" fill="#fff" stroke="#555" stroke-width="0.6"/></g></svg>
<div class="r" style="left:1126.3px;top:582.4px;width:22px;height:22px;border-radius:50%;background:#4b80bb;border:2px solid #fff;box-shadow:0 0.5px 1.5px rgba(0,0,0,0.3);"></div>
<div class="t" style="left:1134.05px;top:587.99px;font-size:12.3px;color:#ffffff;font-weight:bold;transform:scaleX(0.9500);">3</div>
<div class="r" style="left:714.7px;top:406.3px;width:22px;height:22px;border-radius:50%;background:#4b80bb;border:2px solid #fff;box-shadow:0 0.5px 1.5px rgba(0,0,0,0.3);"></div>
<div class="t" style="left:722.45px;top:411.89px;font-size:12.3px;color:#ffffff;font-weight:bold;transform:scaleX(0.9500);">4</div>
<div class="r" style="left:835.4px;top:502.79999999999995px;width:27.2px;height:27.2px;border-radius:50%;background:rgba(246,246,40,0.72);"></div>
<svg class="r" style="left:844px;top:510px;" width="13" height="15" viewBox="0 0 13 15"><g transform="scale(1.25)"><path d="M3 1.2 A0.9 0.9 0 0 1 4.8 1.2 V5 L5 4.6 A0.9 0.9 0 0 1 6.6 5.2 A0.9 0.9 0 0 1 8.2 5.8 A0.9 0.9 0 0 1 9.5 6.6 V9 Q9.5 11.3 7.2 11.3 H5 Q3.8 11.3 3 10.2 L0.8 7 A0.9 0.9 0 0 1 2.3 6 L3 7 Z" fill="#fff" stroke="#555" stroke-width="0.6"/></g></svg>
<div class="r" style="left:818.2px;top:523px;width:22px;height:22px;border-radius:50%;background:#4b80bb;border:2px solid #fff;box-shadow:0 0.5px 1.5px rgba(0,0,0,0.3);"></div>
<div class="t" style="left:825.95px;top:528.59px;font-size:12.3px;color:#ffffff;font-weight:bold;transform:scaleX(0.9500);">5</div>
</body></html>
